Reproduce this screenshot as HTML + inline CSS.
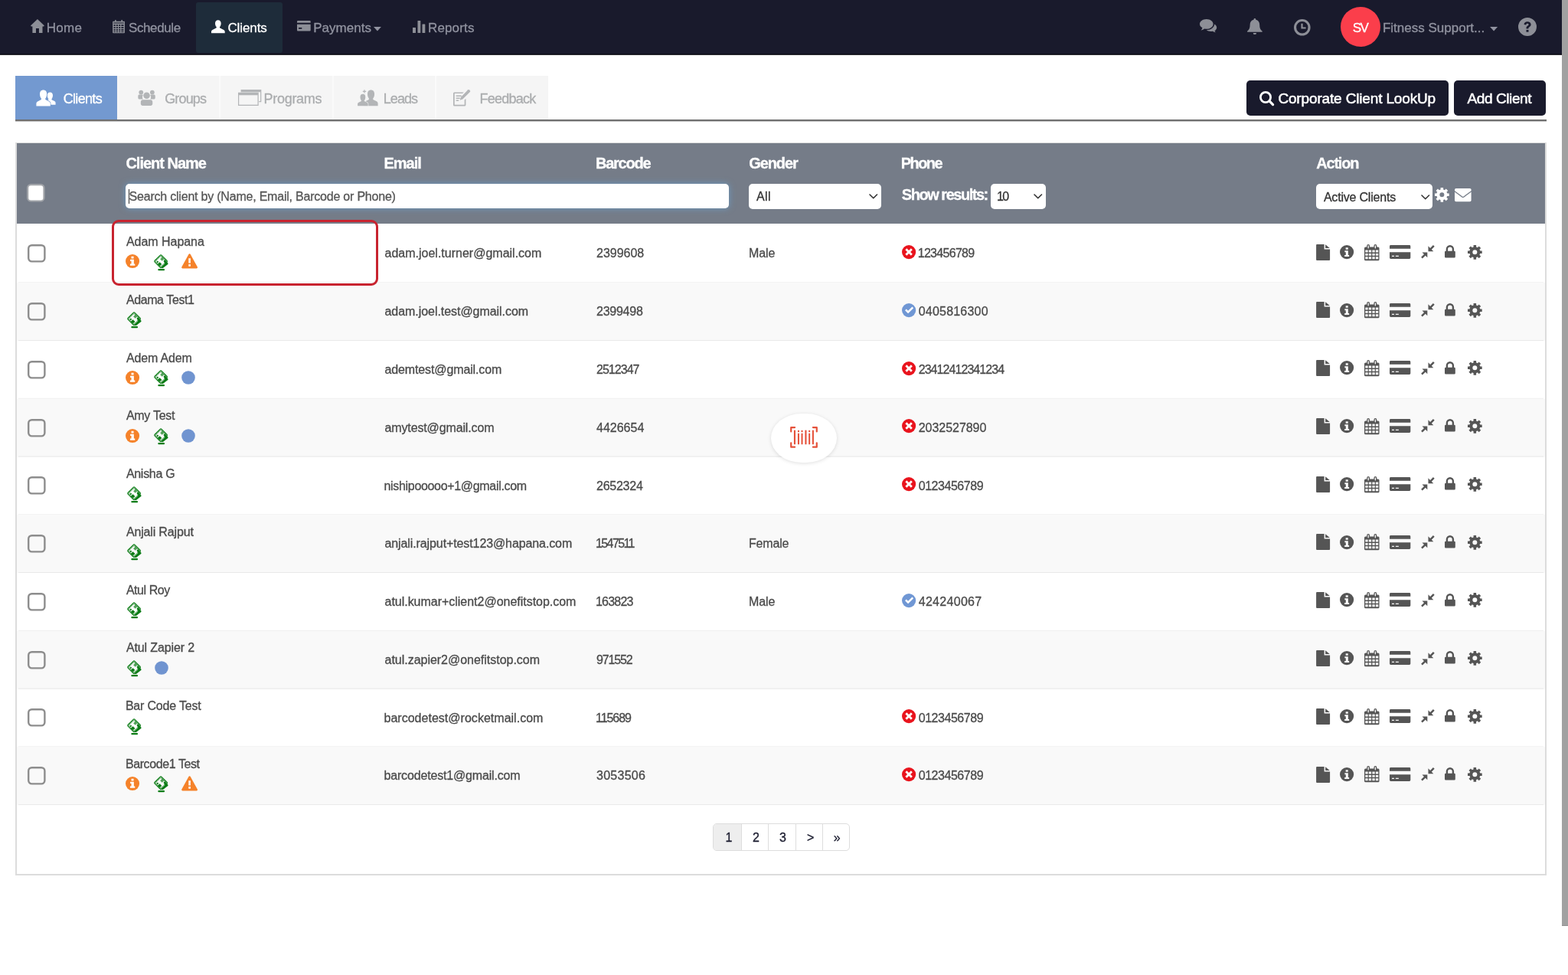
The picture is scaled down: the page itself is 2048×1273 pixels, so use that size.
<!DOCTYPE html>
<html lang="en"><head><meta charset="utf-8"><title>Clients</title>
<style>
*{box-sizing:border-box}
html,body{margin:0;padding:0}
body{width:2048px;height:1273px;overflow:hidden;background:#fff;position:relative;
 font-family:"Liberation Sans",sans-serif;font-size:16px;color:#4a4a4a}
#app{position:absolute;left:0;top:0;width:2048px;height:1273px;will-change:transform}
.t{position:absolute;white-space:pre;display:block;-webkit-text-stroke:.3px}
.ic{position:absolute;display:block;overflow:visible}
.abs{position:absolute}
#nav{position:absolute;left:0;top:0;width:2040px;height:72px;background:linear-gradient(#191a2c,#191a2c 70px,#0d0e19 70px,#0d0e19 71px,#2e2e34 71px)}
#nav .act{position:absolute;left:256px;top:3px;width:113px;height:66px;background:#1e2c3a;border-radius:3px}
#avatar{position:absolute;left:1750.800px;top:8.800px;width:52px;height:52px;border-radius:50%;background:#fb3e4b}
#scroll{position:absolute;left:2040px;top:0;width:8px;height:1209px;background:#a1a1a1;border-bottom:1px solid #8f8f8f}
.tab{position:absolute;top:99px;height:57px;background:#f5f5f5}
.tab.on{background:#7399d0}
#tabline{position:absolute;left:20px;top:156px;width:2000px;height:3px;background:linear-gradient(#6f6f6f,#6f6f6f 2px,#c4c4c4 2px)}
.btn{position:absolute;top:105px;height:46px;background:#191a2c;border-radius:5px}
#tbl{position:absolute;left:20px;top:186px;width:2000px;height:956.500px;border:2px solid #dcdcdc;background:#fff}
#thead{position:absolute;left:22px;top:187px;width:1996px;height:105px;background:#757c88}
.row{position:absolute;left:22px;width:1996px;background:#fff}
.sep{position:absolute;left:24px;width:1992px;height:1px}
.row.alt{background:#f9f9f9}
.cb{position:absolute;width:24px;height:24px;border:2px solid #8c8c8c;border-radius:5.500px;background:#fff}
.row.alt .cb{background:#f9f9f9}
.inp{position:absolute;background:#fff;border-radius:5px}
#search{box-shadow:0 0 8px rgba(102,175,233,.6)}
#hl{position:absolute;left:146px;top:287px;width:348px;height:86px;border:3px solid #c8232f;border-radius:9px}
#pill{position:absolute;left:1007.300px;top:539.500px;width:85.600px;height:64px;border-radius:40px/32px;background:#fff;box-shadow:0 1px 5px rgba(0,0,0,.13)}
#pager{position:absolute;left:931px;top:1075px;width:179px;height:36px;border:1px solid #ddd;border-radius:5px;background:#fff;overflow:hidden}
#pager i{position:absolute;top:0;width:1px;height:100%;background:#ddd}
#pager b{position:absolute;left:0;top:0;width:36px;height:100%;background:#eee}
</style></head>
<body><div id="app">
<div id="nav"><div class="act"></div></div>
<svg class="ic" style="left:40.2px;top:25.2px;width:17.9px;height:17.9px" viewBox="0 0 18 18" fill="#8d8f97" color="#8d8f97" ><path d="M9 0 18 8.600 17.200 9.600H15.600V18H11V12H7V18H2.400V9.600H0.800L0 8.600z"/></svg>
<span class="t" style="left:60.70px;top:26.00px;font-size:17px;line-height:21px;color:#9193a0;letter-spacing:0.302px;">Home</span>
<svg class="ic" style="left:146.6px;top:25.7px;width:16.1px;height:17.2px" viewBox="0 0 16 17.4" fill="#8d8f97" color="#8d8f97" ><path fill-rule="evenodd" d="M3 0h1.600v1.800h6.800V0H13v1.800h2.200a0.800 0.800 0 0 1 0.800 0.800V16.600a0.800 0.800 0 0 1-0.800 0.800H0.800A0.800 0.800 0 0 1 0 16.600V2.600a0.800 0.800 0 0 1 0.800-0.800H3zM1.500 6.300v1.900h2.100V6.300zM4.800 6.300v1.900h2.100V6.300zM8.100 6.300v1.900h2.100V6.300zM11.400 6.300v1.900h3.100V6.300zM1.500 9.300v1.900h2.100V9.300zM4.800 9.300v1.900h2.100V9.300zM8.100 9.300v1.900h2.100V9.300zM11.400 9.300v1.900h3.100V9.300zM1.500 12.300v1.900h2.100v-1.900zM4.800 12.300v1.900h2.100v-1.900zM8.100 12.300v1.900h2.100v-1.900zM11.400 12.300v1.900h3.100v-1.900zM1.500 15.200v1h2.100v-1zM4.800 15.200v1h2.100v-1zM8.100 15.200v1h2.100v-1zM11.400 15.200v1h3.100v-1zM1.200 3.600v0.900h13.600V3.600z"/></svg>
<span class="t" style="left:168.00px;top:26.00px;font-size:17px;line-height:21px;color:#9193a0;letter-spacing:-0.391px;">Schedule</span>
<svg class="ic" style="left:275.9px;top:25.7px;width:17.7px;height:17.4px" viewBox="0 0 18 17.4" fill="#fff" color="#fff" ><path d="M9 0C11.500 0 12.900 1.800 12.900 4.400c0 1.900-0.600 3.600-1.600 4.700-0.300 0.400-0.300 1.100 0.200 1.400l4.900 2.700c1 0.600 1.600 1.400 1.600 2.500v1.700H0v-1.700c0-1.100 0.600-1.900 1.600-2.500l4.900-2.700c0.500-0.300 0.500-1 0.200-1.400C5.700 8 5.100 6.300 5.100 4.400 5.100 1.800 6.500 0 9 0z"/></svg>
<span class="t" style="left:297.40px;top:26.00px;font-size:17px;line-height:21px;color:#fff;letter-spacing:-0.094px;">Clients</span>
<svg class="ic" style="left:388.4px;top:27.1px;width:17.7px;height:13.5px" viewBox="0 0 17.700 13.500" fill="#8d8f97" color="#8d8f97" ><path fill-rule="evenodd" d="M1 0h15.700a1 1 0 0 1 1 1v1.800H0V1a1 1 0 0 1 1-1zM0 4.800h17.700v7.700a1 1 0 0 1-1 1H1a1 1 0 0 1-1-1zM2 9v1.800h4.300V9z"/></svg>
<span class="t" style="left:409.20px;top:26.00px;font-size:17px;line-height:21px;color:#9193a0;letter-spacing:0.045px;">Payments</span>
<svg class="ic" style="left:488.4px;top:34.9px;width:9.9px;height:5.6px" viewBox="0 0 10 5.500" fill="#9193a0" color="#9193a0" ><path d="M0 0h10L5 5.500z"/></svg>
<svg class="ic" style="left:539.4px;top:27.1px;width:16.3px;height:16px" viewBox="0 0 16.300 16" fill="#8d8f97" color="#8d8f97" ><rect x="0" y="9" width="3.300" height="7" rx="0.500"/><rect x="4.400" y="5.500" width="3.300" height="10.500" rx="0.500" opacity="0"/><rect x="6.500" y="0" width="3.800" height="16" rx="0.500"/><rect x="0" y="9" width="4" height="7" rx="0.500"/><rect x="12.500" y="4.500" width="3.800" height="11.500" rx="0.500"/></svg>
<span class="t" style="left:559.00px;top:26.00px;font-size:17px;line-height:21px;color:#9193a0;letter-spacing:0.146px;">Reports</span>
<svg class="ic" style="left:1567px;top:24.9px;width:22.2px;height:17.2px" viewBox="0 0 22.200 17.200" fill="#8d8f97" color="#8d8f97" ><path d="M8.800 0C13.700 0 17.600 2.900 17.600 6.400S13.700 12.800 8.800 12.800c-0.900 0-1.800-0.100-2.600-0.300C5 13.500 3.300 14.200 1.600 14.400c1-1 1.600-2.100 1.800-3.200C1.300 10 0 8.300 0 6.400 0 2.900 3.900 0 8.800 0z"/><path d="M19.300 6.400c1.800 1.100 2.900 2.700 2.900 4.500 0 1.700-1 3.200-2.700 4.300 0.200 0.700 0.700 1.400 1.300 2-1.500-0.100-2.900-0.600-4-1.500-0.700 0.100-1.500 0.200-2.300 0.200-2.200 0-4.200-0.600-5.700-1.700 5.600-0.100 10.200-3.400 10.500-7.800z"/></svg>
<svg class="ic" style="left:1629.3px;top:23.5px;width:19.8px;height:21.5px" viewBox="0 0 19.800 21.500" fill="#8d8f97" color="#8d8f97" ><path d="M9.900 0c0.800 0 1.400 0.600 1.400 1.400v0.400c3.100 0.700 4.900 3.300 4.900 6.600 0 4.800 1.500 6.600 3.300 8 0.500 0.400 0.300 1.300-0.400 1.300H0.700c-0.700 0-0.900-0.900-0.400-1.300 1.800-1.400 3.300-3.200 3.300-8 0-3.300 1.800-5.900 4.900-6.600V1.400C8.500 0.600 9.100 0 9.900 0zM7.700 18.900h4.400a2.200 2.200 0 0 1-4.400 0z"/></svg>
<svg class="ic" style="left:1689.7px;top:24.9px;width:21.6px;height:21.6px" viewBox="0 0 21.6 21.6" fill="#8d8f97" color="#8d8f97" ><path fill-rule="evenodd" d="M10.800 0a10.800 10.800 0 1 1 0 21.600A10.800 10.800 0 0 1 10.800 0zM10.800 3.100a7.700 7.700 0 1 0 0 15.400 7.700 7.700 0 0 0 0-15.400zM9.400 5.800h2.200v4.600h4v2.200H9.400z"/></svg>
<div id="avatar"></div>
<span class="t" style="left:1766.80px;top:26.00px;font-size:17px;line-height:21px;color:#fff;letter-spacing:-1.600px;">SV</span>
<span class="t" style="left:1805.90px;top:26.00px;font-size:17px;line-height:21px;color:#9193a0;letter-spacing:0.006px;">Fitness Support...</span>
<svg class="ic" style="left:1946px;top:34.9px;width:10.2px;height:5.5px" viewBox="0 0 10 5.500" fill="#9193a0" color="#9193a0" ><path d="M0 0h10L5 5.500z"/></svg>
<svg class="ic" style="left:1982.9px;top:23.3px;width:24px;height:24px" viewBox="0 0 24 24" fill="#8d8f97" color="#8d8f97" ><path fill-rule="evenodd" d="M12 0a12 12 0 1 1 0 24A12 12 0 0 1 12 0zM12 5.200c-2.500 0-4.300 1.500-4.500 3.800l2.700 0.400c0.100-1 0.800-1.700 1.800-1.700 0.900 0 1.600 0.600 1.600 1.400 0 0.700-0.400 1.100-1.300 1.700-1.200 0.800-1.800 1.500-1.800 3v0.600h2.900v-0.400c0-0.700 0.300-1.100 1.200-1.700 1.300-0.900 2-1.800 2-3.300 0-2.300-1.900-3.800-4.600-3.800zM10.500 15.900v2.900h3v-2.900z"/></svg>
<div id="scroll"></div>
<div class="tab on" style="left:20px;width:133.0px"></div>
<div class="tab " style="left:153px;width:563.0px"></div>
<div class="abs" style="left:286px;top:99px;width:1.500px;height:57px;background:#fafafa"></div>
<div class="abs" style="left:434px;top:99px;width:1.500px;height:57px;background:#fafafa"></div>
<div class="abs" style="left:568px;top:99px;width:1.500px;height:57px;background:#fafafa"></div>
<div id="tabline"></div>
<svg class="ic" style="left:47.9px;top:116.7px;width:24.6px;height:21.4px" viewBox="0 0 24.600 21.400" fill="#fff" color="#fff" ><path d="M17.40 3.40C19.90 3.40 20.99 5.12 20.99 7.61C20.99 9.48 20.44 11.04 19.58 12.14C19.27 12.60 19.43 13.23 19.90 13.46L23.17 15.10C24.11 15.57 24.58 16.35 24.58 17.28V19.78H10.22V17.28C10.22 16.35 10.69 15.57 11.63 15.10L14.90 13.46C15.37 13.23 15.53 12.60 15.22 12.14C14.36 11.04 13.81 9.48 13.81 7.61C13.81 5.12 14.90 3.40 17.40 3.40z"/><path stroke="#7399d0" stroke-width="1.300" paint-order="stroke" d="M8.60 0.40C11.80 0.40 13.20 2.60 13.20 5.80C13.20 8.20 12.50 10.20 11.40 11.60C11.00 12.20 11.20 13.00 11.80 13.30L16.00 15.40C17.20 16.00 17.80 17.00 17.80 18.20V21.40H-0.60V18.20C-0.60 17.00 0.00 16.00 1.20 15.40L5.40 13.30C6.00 13.00 6.20 12.20 5.80 11.60C4.70 10.20 4.00 8.20 4.00 5.80C4.00 2.60 5.40 0.40 8.60 0.40z" class="u2"/></svg>
<span class="t" style="left:82.70px;top:118.00px;font-size:18px;line-height:22px;color:#fff;letter-spacing:-0.670px;">Clients</span>
<svg class="ic" style="left:179.8px;top:116.7px;width:23.1px;height:21px" viewBox="0 0 23 21" fill="#b3b5b7" color="#b3b5b7" ><circle cx="4.200" cy="3.600" r="2.900"/><circle cx="18.800" cy="3.600" r="2.900"/><path d="M0.300 8.200c0-1 0.800-1.700 1.800-1.700h3.600c0.500 0 0.900 0.200 1.200 0.500-0.800 1-1.200 2.300-0.900 3.700 0.100 0.700 0.400 1.300 0.800 1.800H2.100c-1 0-1.800-0.800-1.800-1.800zM22.700 8.200c0-1-0.800-1.700-1.800-1.700h-3.600c-0.500 0-0.900 0.200-1.200 0.500 0.800 1 1.200 2.300 0.900 3.700-0.100 0.700-0.400 1.300-0.800 1.800h4.700c1 0 1.800-0.800 1.800-1.800z"/><circle cx="11.500" cy="7.800" r="4.300"/><path d="M3.800 16c0-1.500 1.200-2.700 2.700-2.700h10c1.500 0 2.700 1.200 2.700 2.700v2.500c0 1.400-1.100 2.500-2.500 2.500H6.300c-1.400 0-2.500-1.100-2.500-2.500z"/></svg>
<span class="t" style="left:215.20px;top:118.00px;font-size:18px;line-height:22px;color:#aaacae;letter-spacing:-0.845px;">Groups</span>
<svg class="ic" style="left:311px;top:116.7px;width:30.3px;height:21px" viewBox="0 0 30.300 21" fill="#b3b5b7" color="#b3b5b7" ><path fill-rule="evenodd" d="M3.600 0h26.700v16.200h-3V15h1.800V3.200H3.600zM0 3.700h26.700V21H0zM1.200 7.200v12.600h24.300V7.200z"/></svg>
<span class="t" style="left:344.60px;top:118.00px;font-size:18px;line-height:22px;color:#aaacae;letter-spacing:-0.303px;">Programs</span>
<svg class="ic" style="left:467.2px;top:116.7px;width:27px;height:21.4px" viewBox="0 0 27.400 21.400" fill="#b3b5b7" color="#b3b5b7" ><path d="M17.80 0.40C21.00 0.40 22.40 2.60 22.40 5.80C22.40 8.20 21.70 10.20 20.60 11.60C20.20 12.20 20.40 13.00 21.00 13.30L25.20 15.40C26.40 16.00 27.00 17.00 27.00 18.20V21.40H8.60V18.20C8.60 17.00 9.20 16.00 10.40 15.40L14.60 13.30C15.20 13.00 15.40 12.20 15.00 11.60C13.90 10.20 13.20 8.20 13.20 5.80C13.20 2.60 14.60 0.40 17.80 0.40z"/><path stroke="#f5f5f5" stroke-width="1.200" paint-order="stroke" d="M7.00 5.60C9.40 5.60 10.45 7.25 10.45 9.65C10.45 11.45 9.93 12.95 9.10 14.00C8.80 14.45 8.95 15.05 9.40 15.28L12.55 16.85C13.45 17.30 13.90 18.05 13.90 18.95V21.35H0.10V18.95C0.10 18.05 0.55 17.30 1.45 16.85L4.60 15.28C5.05 15.05 5.20 14.45 4.90 14.00C4.08 12.95 3.55 11.45 3.55 9.65C3.55 7.25 4.60 5.60 7.00 5.60z"/><path d="M8.500 0h1.200v1.600h1.600v1.200H9.700v1.600H8.500V2.800H6.900V1.600h1.600z"/></svg>
<span class="t" style="left:500.70px;top:118.00px;font-size:18px;line-height:22px;color:#aaacae;letter-spacing:-0.911px;">Leads</span>
<svg class="ic" style="left:591.9px;top:116.7px;width:22.2px;height:21.4px" viewBox="0 0 22.200 21.400" fill="#b3b5b7" color="#b3b5b7" ><path fill-rule="evenodd" d="M1.500 3.400h12.300l-1.700 1.700H1.700v14.600h13V13.400l1.700-1.700v8.200a1.500 1.500 0 0 1-1.500 1.500H1.500A1.500 1.500 0 0 1 0 19.900V4.900a1.500 1.500 0 0 1 1.500-1.500z"/><path d="M3.700 7.600h7v1.500h-7zM3.700 10.600h5v1.500h-5zM3.700 13.600h3.400v1.500H3.700z"/><path d="M19.300 0.300a1 1 0 0 1 1.400 0l1.200 1.200a1 1 0 0 1 0 1.400L12.300 12.500 8.600 13.700 9.800 10z"/></svg>
<span class="t" style="left:626.50px;top:118.00px;font-size:18px;line-height:22px;color:#aaacae;letter-spacing:-0.750px;">Feedback</span>
<div class="btn" style="left:1628px;width:264px"></div>
<div class="btn" style="left:1898.700px;width:120px"></div>
<svg class="ic" style="left:1645.3px;top:118.6px;width:19.4px;height:19.4px" viewBox="0 0 19.4 19.4" fill="#fff" color="#fff" ><g fill="none" stroke="currentColor"><circle cx="8" cy="8" r="6.600" stroke-width="2.800"/><path stroke-width="3.200" stroke-linecap="round" d="M13 13 17.600 17.600"/></g></svg>
<span class="t" style="left:1669.40px;top:117.00px;font-size:19px;line-height:23px;color:#fff;letter-spacing:-0.152px;-webkit-text-stroke:.5px #fff;">Corporate Client LookUp</span>
<span class="t" style="left:1916.60px;top:117.00px;font-size:19px;line-height:23px;color:#fff;letter-spacing:-0.420px;-webkit-text-stroke:.5px #fff;">Add Client</span>
<div id="tbl"></div><div id="thead"></div>
<span class="t" style="left:164.40px;top:201.00px;font-size:20px;line-height:24px;font-weight:700;color:#fff;letter-spacing:-1.006px;">Client Name</span>
<span class="t" style="left:501.50px;top:201.00px;font-size:20px;line-height:24px;font-weight:700;color:#fff;letter-spacing:-1.001px;">Email</span>
<span class="t" style="left:778.00px;top:201.00px;font-size:20px;line-height:24px;font-weight:700;color:#fff;letter-spacing:-1.251px;">Barcode</span>
<span class="t" style="left:978.30px;top:201.00px;font-size:20px;line-height:24px;font-weight:700;color:#fff;letter-spacing:-1.107px;">Gender</span>
<span class="t" style="left:1176.80px;top:201.00px;font-size:20px;line-height:24px;font-weight:700;color:#fff;letter-spacing:-1.600px;">Phone</span>
<span class="t" style="left:1719.20px;top:201.00px;font-size:20px;line-height:24px;font-weight:700;color:#fff;letter-spacing:-1.180px;">Action</span>
<svg class="ic" style="left:35.2px;top:239.8px;width:23.6px;height:23.6px" viewBox="0 0 23.6 23.6" ><rect x="1.100" y="1.100" width="21.400" height="21.400" rx="4.300" fill="#fff" stroke="#a0a3a8" stroke-width="2.200"/></svg>
<div class="inp" id="search" style="left:164px;top:240px;width:788px;height:32px"></div>
<div class="abs" style="left:168px;top:246.500px;width:1.200px;height:19px;background:#333"></div>
<span class="t" style="left:168.60px;top:247.00px;font-size:16px;line-height:20px;color:#555;letter-spacing:-0.214px;">Search client by (Name, Email, Barcode or Phone)</span>
<div class="inp" style="left:977.800px;top:240px;width:173px;height:32.500px"></div>
<span class="t" style="left:988.00px;top:247.00px;font-size:16px;line-height:20px;color:#333;letter-spacing:0.387px;">All</span>
<svg class="ic" style="left:1135.3px;top:252.8px;width:11.5px;height:6.7px" viewBox="0 0 12 7" ><path fill="none" stroke="#333" stroke-width="1.600" stroke-linecap="round" stroke-linejoin="round" d="M1 1 6 6 11 1"/></svg>
<span class="t" style="left:1177.80px;top:242.00px;font-size:20px;line-height:24px;font-weight:700;color:#fff;letter-spacing:-1.473px;">Show results:</span>
<div class="inp" style="left:1293.700px;top:240px;width:72px;height:32.500px"></div>
<span class="t" style="left:1302.00px;top:247.00px;font-size:16px;line-height:20px;color:#333;letter-spacing:-1.600px;">10</span>
<svg class="ic" style="left:1349.9px;top:252.8px;width:11.5px;height:6.7px" viewBox="0 0 12 7" ><path fill="none" stroke="#333" stroke-width="1.600" stroke-linecap="round" stroke-linejoin="round" d="M1 1 6 6 11 1"/></svg>
<div class="inp" style="left:1718.800px;top:240.200px;width:152.400px;height:32.700px"></div>
<span class="t" style="left:1728.90px;top:248.00px;font-size:16px;line-height:20px;color:#333;letter-spacing:-0.202px;">Active Clients</span>
<svg class="ic" style="left:1855.7px;top:253.8px;width:11.5px;height:6.7px" viewBox="0 0 12 7" ><path fill="none" stroke="#333" stroke-width="1.600" stroke-linecap="round" stroke-linejoin="round" d="M1 1 6 6 11 1"/></svg>
<svg class="ic" style="left:1874.4px;top:244.9px;width:18.7px;height:18.7px" viewBox="0 0 18.6 18.6" fill="#fff" color="#fff" ><g fill="none" stroke="currentColor"><circle cx="9.3" cy="9.3" r="5.00" stroke-width="4.00"/><path stroke-width="3.5" d="M15.30 9.30L18.60 9.30M13.54 13.54L15.88 15.88M9.30 15.30L9.30 18.60M5.06 13.54L2.72 15.88M3.30 9.30L0.00 9.30M5.06 5.06L2.72 2.72M9.30 3.30L9.30 0.00M13.54 5.06L15.88 2.72"/></g></svg>
<svg class="ic" style="left:1900.2px;top:246px;width:21.6px;height:17.3px" viewBox="0 0 21.6 17.3" fill="#fff" color="#fff" ><rect x="0" y="0" width="21.6" height="17.3" rx="1.700"/><path fill="none" stroke="#757c88" stroke-width="1.300" stroke-linejoin="round" d="M-0.500 3.400 9.600 10.900a2 2 0 0 0 2.400 0L22.100 3.400"/></svg>
<div class="row" style="top:292px;height:77px"></div>
<div class="sep" style="top:368px;background:rgba(0,0,0,0.049)"></div><div class="sep" style="top:369px;background:rgba(0,0,0,0.016)"></div>
<svg class="ic" style="left:35.9px;top:319.4px;width:23.6px;height:23.6px" viewBox="0 0 23.6 23.6" ><rect x="1.200" y="1.200" width="21.200" height="21.200" rx="4.300" fill="none" stroke="#8d8d8d" stroke-width="2.400"/></svg>
<span class="t" style="left:164.90px;top:306.00px;font-size:16px;line-height:20px;color:#4a4a4a;letter-spacing:-0.029px;">Adam Hapana</span>
<svg class="ic" style="left:164.4px;top:332.4px;width:18.1px;height:18.1px" viewBox="0 0 18 18" ><circle cx="9" cy="9" r="9" fill="#f5822a"/><path fill="#fff" d="M7.500 2.700h3v2.800H7.500zM6.100 6.800h4.700v5.700h1.400v2.200H5.900v-2.200h1.600V9H6.100z"/></svg>
<svg class="ic" style="left:200.9px;top:331.6px;width:18.2px;height:21.4px" viewBox="0 0 18.2 21.4" ><g fill="none" stroke="#0c7c16"><rect x="-6.200" y="-6.200" width="12.400" height="12.400" rx="1.300" stroke-width="1.300" transform="translate(9.100 9.200) rotate(45)"/><rect x="-4.900" y="-4.900" width="9.800" height="9.800" rx="0.800" stroke-width="0.900" stroke-dasharray="1.400 0.500" transform="translate(9.100 9.200) rotate(45)"/></g><g fill="#0c7c16"><path d="M14.300 6.900 18.300 11.500a1.200 1.200 0 0 1 0 1.500L11.600 18.300 9.300 17.600 14.600 12.300 12.500 8.700z"/><rect x="-1.900" y="-1.900" width="3.800" height="3.800" rx="0.400" transform="translate(7.600 12.900) rotate(45)"/><circle cx="4.900" cy="9.900" r="1.050"/><rect x="-1.800" y="-1.800" width="3.600" height="3.600" opacity="0.700" transform="translate(10.700 6.200) rotate(45)"/><rect x="5.300" y="18.900" width="8.800" height="2.400" rx="1.100"/></g></svg>
<svg class="ic" style="left:237.1px;top:331.1px;width:21.2px;height:19.6px" viewBox="0 0 21 19.6" ><path fill="#f5822a" d="M10.500 0.300a1.300 1.300 0 0 1 1.150 0.700l9.100 16.500a1.300 1.300 0 0 1-1.150 1.950H1.400a1.300 1.300 0 0 1-1.150-1.950L9.350 1a1.300 1.300 0 0 1 1.150-0.700z"/><path fill="#fff" d="M9.200 6.200h2.600v6.300H9.200zM9.200 14.100h2.600v2.600H9.200z"/><path fill="#f5822a" opacity=".35" d="M9.200 9.300h2.600v0.500H9.200z"/></svg>
<span class="t" style="left:502.50px;top:321.00px;font-size:16px;line-height:20px;color:#4a4a4a;letter-spacing:0.003px;">adam.joel.turner@gmail.com</span>
<span class="t" style="left:779.00px;top:321.00px;font-size:16px;line-height:20px;color:#4a4a4a;letter-spacing:-0.015px;">2399608</span>
<span class="t" style="left:978.00px;top:321.00px;font-size:16px;line-height:20px;color:#4a4a4a;letter-spacing:-0.094px;">Male</span>
<svg class="ic" style="left:1177.6px;top:320.1px;width:18.2px;height:18.2px" viewBox="0 0 18 18" ><circle cx="9" cy="9" r="9" fill="#e9141d"/><path fill="#fff" d="M4.300 6.300 6.300 4.300 9 7 11.700 4.300 13.700 6.300 11 9 13.700 11.700 11.700 13.700 9 11 6.300 13.700 4.300 11.700 7 9z"/></svg>
<span class="t" style="left:1198.70px;top:321.00px;font-size:16px;line-height:20px;color:#4a4a4a;letter-spacing:-0.698px;">123456789</span>
<svg class="ic" style="left:1719px;top:318.7px;width:18.2px;height:21px" viewBox="0 0 18 21" fill="#555" color="#555" ><path d="M1 0h9.5v6.5H18V20a1 1 0 0 1-1 1H1a1 1 0 0 1-1-1V1a1 1 0 0 1 1-1z"/><path d="M12 0.3 17.7 5H12z"/></svg>
<svg class="ic" style="left:1750.3px;top:319.9px;width:18.2px;height:18.2px" viewBox="0 0 18 18" fill="#555" color="#555" ><path fill-rule="evenodd" d="M9 0a9 9 0 1 0 0 18A9 9 0 0 0 9 0zM7.6 3.2h3v2.6h-3zM6.3 7.2h4.4v5.6h1.3v2H6.1v-2h1.6V9.2H6.3z"/></svg>
<svg class="ic" style="left:1782px;top:318.6px;width:19.5px;height:21.2px" viewBox="0 0 19.5 21.2" fill="#555" color="#555" ><path fill-rule="evenodd" d="M3.200 1.950a1.950 1.950 0 0 1 3.900 0V3.400h5.300V1.950a1.950 1.950 0 0 1 3.900 0V3.400H18a1.500 1.500 0 0 1 1.500 1.500V19.700a1.500 1.500 0 0 1-1.500 1.500H1.500A1.500 1.500 0 0 1 0 19.700V4.900a1.500 1.500 0 0 1 1.500-1.500h1.700zM4.500 1.950v2.800a0.650 0.650 0 0 0 1.300 0V1.950a0.650 0.650 0 0 0-1.300 0zM13.700 1.950v2.800a0.650 0.650 0 0 0 1.300 0V1.950a0.650 0.650 0 0 0-1.300 0zM1.300 7.500v2.900h3.300V7.500zM5.800 7.500v2.900h3.300V7.500zM10.400 7.500v2.900h3.300V7.500zM14.900 7.500v2.900h3.300V7.500zM1.300 11.900v2.900h3.300v-2.900zM5.800 11.900v2.900h3.300v-2.900zM10.400 11.900v2.900h3.300v-2.900zM14.900 11.900v2.900h3.300v-2.900zM1.300 16.300v2.900h3.300v-2.900zM5.800 16.300v2.900h3.300v-2.900zM10.400 16.300v2.900h3.300v-2.900zM14.900 16.300v2.900h3.300v-2.900z"/></svg>
<svg class="ic" style="left:1814.9px;top:319.9px;width:27.3px;height:18.1px" viewBox="0 0 27.5 18" fill="#555" color="#555" ><path fill-rule="evenodd" d="M1.5 0h24.5a1.5 1.5 0 0 1 1.5 1.5V4.6H0V1.5A1.5 1.5 0 0 1 1.5 0zM0 9.2h27.5v7.3a1.5 1.5 0 0 1-1.5 1.5H1.5A1.5 1.5 0 0 1 0 16.500zM3 13.700v1.400h3v-1.400zM7.900 13.700v1.400h4v-1.400z"/></svg>
<svg class="ic" style="left:1855.9px;top:320.2px;width:17.8px;height:17.6px" viewBox="0 0 18 18" fill="#555" color="#555" ><path d="M16.200 0 18 1.800 14 5.800 16.600 8.400H9.600V1.400L12.200 4zM1.800 18 0 16.200 4 12.200 1.400 9.600H8.400V16.600L5.800 14z"/></svg>
<svg class="ic" style="left:1887.2px;top:320.1px;width:13.8px;height:16.5px" viewBox="0 0 13.8 16.5" fill="#555" color="#555" ><path fill-rule="evenodd" d="M6.900 0a5.200 5.200 0 0 1 5.200 5.200V7.800h0.500a1.200 1.200 0 0 1 1.200 1.200V15.300a1.200 1.200 0 0 1-1.200 1.200H1.200A1.200 1.200 0 0 1 0 15.300V9a1.200 1.200 0 0 1 1.200-1.200h0.500V5.200A5.200 5.200 0 0 1 6.900 0zM6.900 2.400a2.800 2.800 0 0 0-2.800 2.800V7.800h5.600V5.200A2.800 2.800 0 0 0 6.900 2.400z"/></svg>
<svg class="ic" style="left:1917.2px;top:319.8px;width:18.7px;height:18.7px" viewBox="0 0 18.6 18.6" fill="#555" color="#555" ><g fill="none" stroke="currentColor"><circle cx="9.3" cy="9.3" r="5.00" stroke-width="4.00"/><path stroke-width="3.5" d="M15.30 9.30L18.60 9.30M13.54 13.54L15.88 15.88M9.30 15.30L9.30 18.60M5.06 13.54L2.72 15.88M3.30 9.30L0.00 9.30M5.06 5.06L2.72 2.72M9.30 3.30L9.30 0.00M13.54 5.06L15.88 2.72"/></g></svg>
<div class="row alt" style="top:369px;height:76px"></div>
<div class="sep" style="top:444px;background:rgba(0,0,0,0.064)"></div>
<svg class="ic" style="left:35.9px;top:395.15px;width:23.6px;height:23.6px" viewBox="0 0 23.6 23.6" ><rect x="1.200" y="1.200" width="21.200" height="21.200" rx="4.300" fill="none" stroke="#8d8d8d" stroke-width="2.400"/></svg>
<span class="t" style="left:164.90px;top:382.00px;font-size:16px;line-height:20px;color:#4a4a4a;letter-spacing:-0.398px;">Adama Test1</span>
<svg class="ic" style="left:166.2px;top:407.35px;width:18.2px;height:21.4px" viewBox="0 0 18.2 21.4" ><g fill="none" stroke="#0c7c16"><rect x="-6.200" y="-6.200" width="12.400" height="12.400" rx="1.300" stroke-width="1.300" transform="translate(9.100 9.200) rotate(45)"/><rect x="-4.900" y="-4.900" width="9.800" height="9.800" rx="0.800" stroke-width="0.900" stroke-dasharray="1.400 0.500" transform="translate(9.100 9.200) rotate(45)"/></g><g fill="#0c7c16"><path d="M14.300 6.900 18.300 11.500a1.200 1.200 0 0 1 0 1.500L11.600 18.300 9.300 17.600 14.600 12.300 12.500 8.700z"/><rect x="-1.900" y="-1.900" width="3.800" height="3.800" rx="0.400" transform="translate(7.600 12.900) rotate(45)"/><circle cx="4.900" cy="9.900" r="1.050"/><rect x="-1.800" y="-1.800" width="3.600" height="3.600" opacity="0.700" transform="translate(10.700 6.200) rotate(45)"/><rect x="5.300" y="18.900" width="8.800" height="2.400" rx="1.100"/></g></svg>
<span class="t" style="left:502.50px;top:397.00px;font-size:16px;line-height:20px;color:#4a4a4a;letter-spacing:-0.049px;">adam.joel.test@gmail.com</span>
<span class="t" style="left:779.00px;top:397.00px;font-size:16px;line-height:20px;color:#4a4a4a;letter-spacing:-0.248px;">2399498</span>
<svg class="ic" style="left:1177.6px;top:395.85px;width:18.2px;height:18.2px" viewBox="0 0 18 18" ><circle cx="9" cy="9" r="9" fill="#7097d4"/><path fill="#fff" d="M4 9.200 5.800 7.400 8 9.700 13.300 4.400 15 6.200 8 13.200z"/></svg>
<span class="t" style="left:1199.70px;top:397.00px;font-size:16px;line-height:20px;color:#4a4a4a;letter-spacing:0.213px;">0405816300</span>
<svg class="ic" style="left:1719px;top:394.45px;width:18.2px;height:21px" viewBox="0 0 18 21" fill="#555" color="#555" ><path d="M1 0h9.5v6.5H18V20a1 1 0 0 1-1 1H1a1 1 0 0 1-1-1V1a1 1 0 0 1 1-1z"/><path d="M12 0.3 17.7 5H12z"/></svg>
<svg class="ic" style="left:1750.3px;top:395.65px;width:18.2px;height:18.2px" viewBox="0 0 18 18" fill="#555" color="#555" ><path fill-rule="evenodd" d="M9 0a9 9 0 1 0 0 18A9 9 0 0 0 9 0zM7.6 3.2h3v2.6h-3zM6.3 7.2h4.4v5.6h1.3v2H6.1v-2h1.6V9.2H6.3z"/></svg>
<svg class="ic" style="left:1782px;top:394.35px;width:19.5px;height:21.2px" viewBox="0 0 19.5 21.2" fill="#555" color="#555" ><path fill-rule="evenodd" d="M3.200 1.950a1.950 1.950 0 0 1 3.900 0V3.400h5.300V1.950a1.950 1.950 0 0 1 3.900 0V3.400H18a1.500 1.500 0 0 1 1.500 1.500V19.700a1.500 1.500 0 0 1-1.500 1.500H1.500A1.500 1.500 0 0 1 0 19.700V4.900a1.500 1.500 0 0 1 1.500-1.500h1.700zM4.500 1.950v2.800a0.650 0.650 0 0 0 1.300 0V1.950a0.650 0.650 0 0 0-1.300 0zM13.700 1.950v2.800a0.650 0.650 0 0 0 1.300 0V1.950a0.650 0.650 0 0 0-1.300 0zM1.300 7.500v2.900h3.300V7.500zM5.800 7.500v2.900h3.300V7.500zM10.400 7.500v2.900h3.300V7.500zM14.900 7.500v2.900h3.300V7.500zM1.300 11.900v2.900h3.300v-2.900zM5.800 11.900v2.900h3.300v-2.900zM10.400 11.900v2.900h3.300v-2.900zM14.900 11.900v2.900h3.300v-2.900zM1.300 16.300v2.900h3.300v-2.900zM5.800 16.300v2.900h3.300v-2.900zM10.400 16.300v2.900h3.300v-2.900zM14.900 16.300v2.900h3.300v-2.900z"/></svg>
<svg class="ic" style="left:1814.9px;top:395.65px;width:27.3px;height:18.1px" viewBox="0 0 27.5 18" fill="#555" color="#555" ><path fill-rule="evenodd" d="M1.5 0h24.5a1.5 1.5 0 0 1 1.5 1.5V4.6H0V1.5A1.5 1.5 0 0 1 1.5 0zM0 9.2h27.5v7.3a1.5 1.5 0 0 1-1.5 1.5H1.5A1.5 1.5 0 0 1 0 16.500zM3 13.700v1.400h3v-1.400zM7.900 13.700v1.400h4v-1.400z"/></svg>
<svg class="ic" style="left:1855.9px;top:395.95px;width:17.8px;height:17.6px" viewBox="0 0 18 18" fill="#555" color="#555" ><path d="M16.200 0 18 1.800 14 5.800 16.600 8.400H9.600V1.400L12.200 4zM1.800 18 0 16.200 4 12.200 1.400 9.600H8.400V16.600L5.800 14z"/></svg>
<svg class="ic" style="left:1887.2px;top:395.85px;width:13.8px;height:16.5px" viewBox="0 0 13.8 16.5" fill="#555" color="#555" ><path fill-rule="evenodd" d="M6.900 0a5.200 5.200 0 0 1 5.200 5.200V7.800h0.500a1.200 1.200 0 0 1 1.200 1.200V15.300a1.200 1.200 0 0 1-1.200 1.200H1.200A1.200 1.200 0 0 1 0 15.300V9a1.200 1.200 0 0 1 1.200-1.200h0.500V5.200A5.200 5.200 0 0 1 6.900 0zM6.900 2.400a2.800 2.800 0 0 0-2.800 2.800V7.800h5.600V5.200A2.800 2.800 0 0 0 6.900 2.400z"/></svg>
<svg class="ic" style="left:1917.2px;top:395.55px;width:18.7px;height:18.7px" viewBox="0 0 18.6 18.6" fill="#555" color="#555" ><g fill="none" stroke="currentColor"><circle cx="9.3" cy="9.3" r="5.00" stroke-width="4.00"/><path stroke-width="3.5" d="M15.30 9.30L18.60 9.30M13.54 13.54L15.88 15.88M9.30 15.30L9.30 18.60M5.06 13.54L2.72 15.88M3.30 9.30L0.00 9.30M5.06 5.06L2.72 2.72M9.30 3.30L9.30 0.00M13.54 5.06L15.88 2.72"/></g></svg>
<div class="row" style="top:445px;height:76px"></div>
<div class="sep" style="top:519px;background:rgba(0,0,0,0.015)"></div><div class="sep" style="top:520px;background:rgba(0,0,0,0.050)"></div>
<svg class="ic" style="left:35.9px;top:470.91px;width:23.6px;height:23.6px" viewBox="0 0 23.6 23.6" ><rect x="1.200" y="1.200" width="21.200" height="21.200" rx="4.300" fill="none" stroke="#8d8d8d" stroke-width="2.400"/></svg>
<span class="t" style="left:164.90px;top:458.00px;font-size:16px;line-height:20px;color:#4a4a4a;letter-spacing:-0.151px;">Adem Adem</span>
<svg class="ic" style="left:164.4px;top:483.91px;width:18.1px;height:18.1px" viewBox="0 0 18 18" ><circle cx="9" cy="9" r="9" fill="#f5822a"/><path fill="#fff" d="M7.500 2.700h3v2.800H7.500zM6.100 6.800h4.700v5.700h1.400v2.200H5.900v-2.200h1.600V9H6.100z"/></svg>
<svg class="ic" style="left:200.9px;top:483.11px;width:18.2px;height:21.4px" viewBox="0 0 18.2 21.4" ><g fill="none" stroke="#0c7c16"><rect x="-6.200" y="-6.200" width="12.400" height="12.400" rx="1.300" stroke-width="1.300" transform="translate(9.100 9.200) rotate(45)"/><rect x="-4.900" y="-4.900" width="9.800" height="9.800" rx="0.800" stroke-width="0.900" stroke-dasharray="1.400 0.500" transform="translate(9.100 9.200) rotate(45)"/></g><g fill="#0c7c16"><path d="M14.300 6.900 18.300 11.500a1.200 1.200 0 0 1 0 1.500L11.600 18.300 9.300 17.600 14.600 12.300 12.500 8.700z"/><rect x="-1.900" y="-1.900" width="3.800" height="3.800" rx="0.400" transform="translate(7.600 12.900) rotate(45)"/><circle cx="4.900" cy="9.900" r="1.050"/><rect x="-1.800" y="-1.800" width="3.600" height="3.600" opacity="0.700" transform="translate(10.700 6.200) rotate(45)"/><rect x="5.300" y="18.900" width="8.800" height="2.400" rx="1.100"/></g></svg>
<svg class="ic" style="left:237.2px;top:483.91px;width:18px;height:18px" viewBox="0 0 18 18" ><circle cx="9" cy="9" r="8.800" fill="#7094d0"/></svg>
<span class="t" style="left:502.50px;top:473.00px;font-size:16px;line-height:20px;color:#4a4a4a;letter-spacing:-0.125px;">ademtest@gmail.com</span>
<span class="t" style="left:779.00px;top:473.00px;font-size:16px;line-height:20px;color:#4a4a4a;letter-spacing:-0.965px;">2512347</span>
<svg class="ic" style="left:1177.6px;top:471.61px;width:18.2px;height:18.2px" viewBox="0 0 18 18" ><circle cx="9" cy="9" r="9" fill="#e9141d"/><path fill="#fff" d="M4.300 6.300 6.300 4.300 9 7 11.700 4.300 13.700 6.300 11 9 13.700 11.700 11.700 13.700 9 11 6.300 13.700 4.300 11.700 7 9z"/></svg>
<span class="t" style="left:1199.70px;top:473.00px;font-size:16px;line-height:20px;color:#4a4a4a;letter-spacing:-0.937px;">23412412341234</span>
<svg class="ic" style="left:1719px;top:470.21px;width:18.2px;height:21px" viewBox="0 0 18 21" fill="#555" color="#555" ><path d="M1 0h9.5v6.5H18V20a1 1 0 0 1-1 1H1a1 1 0 0 1-1-1V1a1 1 0 0 1 1-1z"/><path d="M12 0.3 17.7 5H12z"/></svg>
<svg class="ic" style="left:1750.3px;top:471.41px;width:18.2px;height:18.2px" viewBox="0 0 18 18" fill="#555" color="#555" ><path fill-rule="evenodd" d="M9 0a9 9 0 1 0 0 18A9 9 0 0 0 9 0zM7.6 3.2h3v2.6h-3zM6.3 7.2h4.4v5.6h1.3v2H6.1v-2h1.6V9.2H6.3z"/></svg>
<svg class="ic" style="left:1782px;top:470.11px;width:19.5px;height:21.2px" viewBox="0 0 19.5 21.2" fill="#555" color="#555" ><path fill-rule="evenodd" d="M3.200 1.950a1.950 1.950 0 0 1 3.900 0V3.400h5.300V1.950a1.950 1.950 0 0 1 3.900 0V3.400H18a1.500 1.500 0 0 1 1.500 1.500V19.700a1.500 1.500 0 0 1-1.500 1.500H1.500A1.500 1.500 0 0 1 0 19.700V4.900a1.500 1.500 0 0 1 1.500-1.500h1.700zM4.500 1.950v2.800a0.650 0.650 0 0 0 1.300 0V1.950a0.650 0.650 0 0 0-1.300 0zM13.700 1.950v2.800a0.650 0.650 0 0 0 1.300 0V1.950a0.650 0.650 0 0 0-1.300 0zM1.300 7.500v2.900h3.300V7.500zM5.800 7.500v2.900h3.300V7.500zM10.400 7.500v2.900h3.300V7.500zM14.900 7.500v2.900h3.300V7.500zM1.300 11.900v2.900h3.300v-2.900zM5.800 11.900v2.900h3.300v-2.900zM10.400 11.900v2.900h3.300v-2.900zM14.900 11.900v2.900h3.300v-2.900zM1.300 16.300v2.900h3.300v-2.900zM5.800 16.300v2.900h3.300v-2.900zM10.400 16.300v2.900h3.300v-2.900zM14.900 16.300v2.900h3.300v-2.900z"/></svg>
<svg class="ic" style="left:1814.9px;top:471.41px;width:27.3px;height:18.1px" viewBox="0 0 27.5 18" fill="#555" color="#555" ><path fill-rule="evenodd" d="M1.5 0h24.5a1.5 1.5 0 0 1 1.5 1.5V4.6H0V1.5A1.5 1.5 0 0 1 1.5 0zM0 9.2h27.5v7.3a1.5 1.5 0 0 1-1.5 1.5H1.5A1.5 1.5 0 0 1 0 16.500zM3 13.700v1.400h3v-1.400zM7.900 13.700v1.400h4v-1.400z"/></svg>
<svg class="ic" style="left:1855.9px;top:471.71px;width:17.8px;height:17.6px" viewBox="0 0 18 18" fill="#555" color="#555" ><path d="M16.200 0 18 1.800 14 5.800 16.600 8.400H9.600V1.400L12.200 4zM1.800 18 0 16.200 4 12.200 1.400 9.600H8.400V16.600L5.800 14z"/></svg>
<svg class="ic" style="left:1887.2px;top:471.61px;width:13.8px;height:16.5px" viewBox="0 0 13.8 16.5" fill="#555" color="#555" ><path fill-rule="evenodd" d="M6.900 0a5.200 5.200 0 0 1 5.200 5.200V7.800h0.500a1.200 1.200 0 0 1 1.200 1.200V15.300a1.200 1.200 0 0 1-1.200 1.200H1.200A1.200 1.200 0 0 1 0 15.300V9a1.200 1.200 0 0 1 1.200-1.200h0.500V5.200A5.200 5.200 0 0 1 6.900 0zM6.900 2.400a2.800 2.800 0 0 0-2.800 2.800V7.800h5.600V5.200A2.800 2.800 0 0 0 6.900 2.400z"/></svg>
<svg class="ic" style="left:1917.2px;top:471.31px;width:18.7px;height:18.7px" viewBox="0 0 18.6 18.6" fill="#555" color="#555" ><g fill="none" stroke="currentColor"><circle cx="9.3" cy="9.3" r="5.00" stroke-width="4.00"/><path stroke-width="3.5" d="M15.30 9.30L18.60 9.30M13.54 13.54L15.88 15.88M9.30 15.30L9.30 18.60M5.06 13.54L2.72 15.88M3.30 9.30L0.00 9.30M5.06 5.06L2.72 2.72M9.30 3.30L9.30 0.00M13.54 5.06L15.88 2.72"/></g></svg>
<div class="row alt" style="top:521px;height:76px"></div>
<div class="sep" style="top:595px;background:rgba(0,0,0,0.031)"></div><div class="sep" style="top:596px;background:rgba(0,0,0,0.034)"></div>
<svg class="ic" style="left:35.9px;top:546.67px;width:23.6px;height:23.6px" viewBox="0 0 23.6 23.6" ><rect x="1.200" y="1.200" width="21.200" height="21.200" rx="4.300" fill="none" stroke="#8d8d8d" stroke-width="2.400"/></svg>
<span class="t" style="left:164.90px;top:533.00px;font-size:16px;line-height:20px;color:#4a4a4a;letter-spacing:-0.263px;">Amy Test</span>
<svg class="ic" style="left:164.4px;top:559.67px;width:18.1px;height:18.1px" viewBox="0 0 18 18" ><circle cx="9" cy="9" r="9" fill="#f5822a"/><path fill="#fff" d="M7.500 2.700h3v2.800H7.500zM6.100 6.800h4.700v5.700h1.400v2.200H5.900v-2.200h1.600V9H6.100z"/></svg>
<svg class="ic" style="left:200.9px;top:558.87px;width:18.2px;height:21.4px" viewBox="0 0 18.2 21.4" ><g fill="none" stroke="#0c7c16"><rect x="-6.200" y="-6.200" width="12.400" height="12.400" rx="1.300" stroke-width="1.300" transform="translate(9.100 9.200) rotate(45)"/><rect x="-4.900" y="-4.900" width="9.800" height="9.800" rx="0.800" stroke-width="0.900" stroke-dasharray="1.400 0.500" transform="translate(9.100 9.200) rotate(45)"/></g><g fill="#0c7c16"><path d="M14.300 6.900 18.300 11.500a1.200 1.200 0 0 1 0 1.500L11.600 18.300 9.300 17.600 14.600 12.300 12.500 8.700z"/><rect x="-1.900" y="-1.900" width="3.800" height="3.800" rx="0.400" transform="translate(7.600 12.900) rotate(45)"/><circle cx="4.900" cy="9.900" r="1.050"/><rect x="-1.800" y="-1.800" width="3.600" height="3.600" opacity="0.700" transform="translate(10.700 6.200) rotate(45)"/><rect x="5.300" y="18.900" width="8.800" height="2.400" rx="1.100"/></g></svg>
<svg class="ic" style="left:237.2px;top:559.67px;width:18px;height:18px" viewBox="0 0 18 18" ><circle cx="9" cy="9" r="8.800" fill="#7094d0"/></svg>
<span class="t" style="left:502.50px;top:549.00px;font-size:16px;line-height:20px;color:#4a4a4a;letter-spacing:-0.133px;">amytest@gmail.com</span>
<span class="t" style="left:779.00px;top:549.00px;font-size:16px;line-height:20px;color:#4a4a4a;letter-spacing:0.002px;">4426654</span>
<svg class="ic" style="left:1177.6px;top:547.37px;width:18.2px;height:18.2px" viewBox="0 0 18 18" ><circle cx="9" cy="9" r="9" fill="#e9141d"/><path fill="#fff" d="M4.300 6.300 6.300 4.300 9 7 11.700 4.300 13.700 6.300 11 9 13.700 11.700 11.700 13.700 9 11 6.300 13.700 4.300 11.700 7 9z"/></svg>
<span class="t" style="left:1199.70px;top:549.00px;font-size:16px;line-height:20px;color:#4a4a4a;letter-spacing:-0.032px;">2032527890</span>
<svg class="ic" style="left:1719px;top:545.97px;width:18.2px;height:21px" viewBox="0 0 18 21" fill="#555" color="#555" ><path d="M1 0h9.5v6.5H18V20a1 1 0 0 1-1 1H1a1 1 0 0 1-1-1V1a1 1 0 0 1 1-1z"/><path d="M12 0.3 17.7 5H12z"/></svg>
<svg class="ic" style="left:1750.3px;top:547.17px;width:18.2px;height:18.2px" viewBox="0 0 18 18" fill="#555" color="#555" ><path fill-rule="evenodd" d="M9 0a9 9 0 1 0 0 18A9 9 0 0 0 9 0zM7.6 3.2h3v2.6h-3zM6.3 7.2h4.4v5.6h1.3v2H6.1v-2h1.6V9.2H6.3z"/></svg>
<svg class="ic" style="left:1782px;top:545.87px;width:19.5px;height:21.2px" viewBox="0 0 19.5 21.2" fill="#555" color="#555" ><path fill-rule="evenodd" d="M3.200 1.950a1.950 1.950 0 0 1 3.900 0V3.400h5.300V1.950a1.950 1.950 0 0 1 3.900 0V3.400H18a1.500 1.500 0 0 1 1.500 1.500V19.700a1.500 1.500 0 0 1-1.500 1.500H1.500A1.500 1.500 0 0 1 0 19.700V4.900a1.500 1.500 0 0 1 1.500-1.500h1.700zM4.500 1.950v2.800a0.650 0.650 0 0 0 1.300 0V1.950a0.650 0.650 0 0 0-1.300 0zM13.700 1.950v2.800a0.650 0.650 0 0 0 1.300 0V1.950a0.650 0.650 0 0 0-1.300 0zM1.300 7.500v2.900h3.300V7.500zM5.800 7.500v2.900h3.300V7.500zM10.400 7.500v2.900h3.300V7.500zM14.900 7.500v2.900h3.300V7.500zM1.300 11.900v2.900h3.300v-2.900zM5.800 11.900v2.900h3.300v-2.900zM10.400 11.900v2.900h3.300v-2.900zM14.900 11.900v2.900h3.300v-2.900zM1.300 16.300v2.900h3.300v-2.900zM5.800 16.300v2.900h3.300v-2.900zM10.400 16.300v2.900h3.300v-2.900zM14.900 16.300v2.900h3.300v-2.900z"/></svg>
<svg class="ic" style="left:1814.9px;top:547.17px;width:27.3px;height:18.1px" viewBox="0 0 27.5 18" fill="#555" color="#555" ><path fill-rule="evenodd" d="M1.5 0h24.5a1.5 1.5 0 0 1 1.5 1.5V4.6H0V1.5A1.5 1.5 0 0 1 1.5 0zM0 9.2h27.5v7.3a1.5 1.5 0 0 1-1.5 1.5H1.5A1.5 1.5 0 0 1 0 16.500zM3 13.700v1.400h3v-1.400zM7.900 13.700v1.400h4v-1.400z"/></svg>
<svg class="ic" style="left:1855.9px;top:547.47px;width:17.8px;height:17.6px" viewBox="0 0 18 18" fill="#555" color="#555" ><path d="M16.200 0 18 1.800 14 5.800 16.600 8.400H9.600V1.400L12.200 4zM1.800 18 0 16.200 4 12.200 1.400 9.600H8.400V16.600L5.800 14z"/></svg>
<svg class="ic" style="left:1887.2px;top:547.37px;width:13.8px;height:16.5px" viewBox="0 0 13.8 16.5" fill="#555" color="#555" ><path fill-rule="evenodd" d="M6.900 0a5.200 5.200 0 0 1 5.200 5.200V7.800h0.500a1.200 1.200 0 0 1 1.200 1.200V15.300a1.200 1.200 0 0 1-1.200 1.200H1.200A1.200 1.200 0 0 1 0 15.300V9a1.200 1.200 0 0 1 1.200-1.200h0.500V5.200A5.200 5.200 0 0 1 6.900 0zM6.900 2.400a2.800 2.800 0 0 0-2.800 2.800V7.800h5.600V5.200A2.800 2.800 0 0 0 6.900 2.400z"/></svg>
<svg class="ic" style="left:1917.2px;top:547.07px;width:18.7px;height:18.7px" viewBox="0 0 18.6 18.6" fill="#555" color="#555" ><g fill="none" stroke="currentColor"><circle cx="9.3" cy="9.3" r="5.00" stroke-width="4.00"/><path stroke-width="3.5" d="M15.30 9.30L18.60 9.30M13.54 13.54L15.88 15.88M9.30 15.30L9.30 18.60M5.06 13.54L2.72 15.88M3.30 9.30L0.00 9.30M5.06 5.06L2.72 2.72M9.30 3.30L9.30 0.00M13.54 5.06L15.88 2.72"/></g></svg>
<div class="row" style="top:597px;height:75px"></div>
<div class="sep" style="top:671px;background:rgba(0,0,0,0.046)"></div><div class="sep" style="top:672px;background:rgba(0,0,0,0.019)"></div>
<svg class="ic" style="left:35.9px;top:622.43px;width:23.6px;height:23.6px" viewBox="0 0 23.6 23.6" ><rect x="1.200" y="1.200" width="21.200" height="21.200" rx="4.300" fill="none" stroke="#8d8d8d" stroke-width="2.400"/></svg>
<span class="t" style="left:164.90px;top:609.00px;font-size:16px;line-height:20px;color:#4a4a4a;letter-spacing:-0.295px;">Anisha G</span>
<svg class="ic" style="left:166.2px;top:634.63px;width:18.2px;height:21.4px" viewBox="0 0 18.2 21.4" ><g fill="none" stroke="#0c7c16"><rect x="-6.200" y="-6.200" width="12.400" height="12.400" rx="1.300" stroke-width="1.300" transform="translate(9.100 9.200) rotate(45)"/><rect x="-4.900" y="-4.900" width="9.800" height="9.800" rx="0.800" stroke-width="0.900" stroke-dasharray="1.400 0.500" transform="translate(9.100 9.200) rotate(45)"/></g><g fill="#0c7c16"><path d="M14.300 6.900 18.300 11.500a1.200 1.200 0 0 1 0 1.500L11.600 18.300 9.300 17.600 14.600 12.300 12.500 8.700z"/><rect x="-1.900" y="-1.900" width="3.800" height="3.800" rx="0.400" transform="translate(7.600 12.900) rotate(45)"/><circle cx="4.900" cy="9.900" r="1.050"/><rect x="-1.800" y="-1.800" width="3.600" height="3.600" opacity="0.700" transform="translate(10.700 6.200) rotate(45)"/><rect x="5.300" y="18.900" width="8.800" height="2.400" rx="1.100"/></g></svg>
<span class="t" style="left:501.50px;top:625.00px;font-size:16px;line-height:20px;color:#4a4a4a;letter-spacing:-0.321px;">nishipooooo+1@gmail.com</span>
<span class="t" style="left:779.00px;top:625.00px;font-size:16px;line-height:20px;color:#4a4a4a;letter-spacing:-0.248px;">2652324</span>
<svg class="ic" style="left:1177.6px;top:623.13px;width:18.2px;height:18.2px" viewBox="0 0 18 18" ><circle cx="9" cy="9" r="9" fill="#e9141d"/><path fill="#fff" d="M4.300 6.300 6.300 4.300 9 7 11.700 4.300 13.700 6.300 11 9 13.700 11.700 11.700 13.700 9 11 6.300 13.700 4.300 11.700 7 9z"/></svg>
<span class="t" style="left:1199.70px;top:625.00px;font-size:16px;line-height:20px;color:#4a4a4a;letter-spacing:-0.454px;">0123456789</span>
<svg class="ic" style="left:1719px;top:621.73px;width:18.2px;height:21px" viewBox="0 0 18 21" fill="#555" color="#555" ><path d="M1 0h9.5v6.5H18V20a1 1 0 0 1-1 1H1a1 1 0 0 1-1-1V1a1 1 0 0 1 1-1z"/><path d="M12 0.3 17.7 5H12z"/></svg>
<svg class="ic" style="left:1750.3px;top:622.93px;width:18.2px;height:18.2px" viewBox="0 0 18 18" fill="#555" color="#555" ><path fill-rule="evenodd" d="M9 0a9 9 0 1 0 0 18A9 9 0 0 0 9 0zM7.6 3.2h3v2.6h-3zM6.3 7.2h4.4v5.6h1.3v2H6.1v-2h1.6V9.2H6.3z"/></svg>
<svg class="ic" style="left:1782px;top:621.63px;width:19.5px;height:21.2px" viewBox="0 0 19.5 21.2" fill="#555" color="#555" ><path fill-rule="evenodd" d="M3.200 1.950a1.950 1.950 0 0 1 3.900 0V3.400h5.300V1.950a1.950 1.950 0 0 1 3.900 0V3.400H18a1.500 1.500 0 0 1 1.500 1.500V19.700a1.500 1.500 0 0 1-1.500 1.500H1.500A1.500 1.500 0 0 1 0 19.700V4.900a1.500 1.500 0 0 1 1.500-1.500h1.700zM4.500 1.950v2.800a0.650 0.650 0 0 0 1.300 0V1.950a0.650 0.650 0 0 0-1.300 0zM13.700 1.950v2.800a0.650 0.650 0 0 0 1.300 0V1.950a0.650 0.650 0 0 0-1.300 0zM1.300 7.500v2.900h3.300V7.500zM5.800 7.500v2.900h3.300V7.500zM10.400 7.500v2.900h3.300V7.500zM14.900 7.500v2.900h3.300V7.500zM1.300 11.900v2.900h3.300v-2.900zM5.800 11.900v2.900h3.300v-2.900zM10.400 11.900v2.900h3.300v-2.900zM14.900 11.900v2.900h3.300v-2.900zM1.300 16.300v2.900h3.300v-2.900zM5.800 16.300v2.900h3.300v-2.900zM10.400 16.300v2.900h3.300v-2.900zM14.900 16.300v2.900h3.300v-2.900z"/></svg>
<svg class="ic" style="left:1814.9px;top:622.93px;width:27.3px;height:18.1px" viewBox="0 0 27.5 18" fill="#555" color="#555" ><path fill-rule="evenodd" d="M1.5 0h24.5a1.5 1.5 0 0 1 1.5 1.5V4.6H0V1.5A1.5 1.5 0 0 1 1.5 0zM0 9.2h27.5v7.3a1.5 1.5 0 0 1-1.5 1.5H1.5A1.5 1.5 0 0 1 0 16.500zM3 13.700v1.400h3v-1.400zM7.900 13.700v1.400h4v-1.400z"/></svg>
<svg class="ic" style="left:1855.9px;top:623.23px;width:17.8px;height:17.6px" viewBox="0 0 18 18" fill="#555" color="#555" ><path d="M16.200 0 18 1.800 14 5.800 16.600 8.400H9.600V1.400L12.200 4zM1.800 18 0 16.200 4 12.200 1.400 9.600H8.400V16.600L5.800 14z"/></svg>
<svg class="ic" style="left:1887.2px;top:623.13px;width:13.8px;height:16.5px" viewBox="0 0 13.8 16.5" fill="#555" color="#555" ><path fill-rule="evenodd" d="M6.900 0a5.200 5.200 0 0 1 5.200 5.200V7.800h0.500a1.200 1.200 0 0 1 1.200 1.200V15.300a1.200 1.200 0 0 1-1.200 1.200H1.200A1.200 1.200 0 0 1 0 15.300V9a1.200 1.200 0 0 1 1.200-1.200h0.500V5.200A5.200 5.200 0 0 1 6.900 0zM6.900 2.400a2.800 2.800 0 0 0-2.800 2.800V7.800h5.600V5.200A2.800 2.800 0 0 0 6.900 2.400z"/></svg>
<svg class="ic" style="left:1917.2px;top:622.83px;width:18.7px;height:18.7px" viewBox="0 0 18.6 18.6" fill="#555" color="#555" ><g fill="none" stroke="currentColor"><circle cx="9.3" cy="9.3" r="5.00" stroke-width="4.00"/><path stroke-width="3.5" d="M15.30 9.30L18.60 9.30M13.54 13.54L15.88 15.88M9.30 15.30L9.30 18.60M5.06 13.54L2.72 15.88M3.30 9.30L0.00 9.30M5.06 5.06L2.72 2.72M9.30 3.30L9.30 0.00M13.54 5.06L15.88 2.72"/></g></svg>
<div class="row alt" style="top:672px;height:76px"></div>
<div class="sep" style="top:747px;background:rgba(0,0,0,0.062)"></div><div class="sep" style="top:748px;background:rgba(0,0,0,0.003)"></div>
<svg class="ic" style="left:35.9px;top:698.19px;width:23.6px;height:23.6px" viewBox="0 0 23.6 23.6" ><rect x="1.200" y="1.200" width="21.200" height="21.200" rx="4.300" fill="none" stroke="#8d8d8d" stroke-width="2.400"/></svg>
<span class="t" style="left:164.90px;top:685.00px;font-size:16px;line-height:20px;color:#4a4a4a;letter-spacing:-0.157px;">Anjali Rajput</span>
<svg class="ic" style="left:166.2px;top:710.39px;width:18.2px;height:21.4px" viewBox="0 0 18.2 21.4" ><g fill="none" stroke="#0c7c16"><rect x="-6.200" y="-6.200" width="12.400" height="12.400" rx="1.300" stroke-width="1.300" transform="translate(9.100 9.200) rotate(45)"/><rect x="-4.900" y="-4.900" width="9.800" height="9.800" rx="0.800" stroke-width="0.900" stroke-dasharray="1.400 0.500" transform="translate(9.100 9.200) rotate(45)"/></g><g fill="#0c7c16"><path d="M14.300 6.900 18.300 11.500a1.200 1.200 0 0 1 0 1.500L11.600 18.300 9.300 17.600 14.600 12.300 12.500 8.700z"/><rect x="-1.900" y="-1.900" width="3.800" height="3.800" rx="0.400" transform="translate(7.600 12.900) rotate(45)"/><circle cx="4.900" cy="9.900" r="1.050"/><rect x="-1.800" y="-1.800" width="3.600" height="3.600" opacity="0.700" transform="translate(10.700 6.200) rotate(45)"/><rect x="5.300" y="18.900" width="8.800" height="2.400" rx="1.100"/></g></svg>
<span class="t" style="left:502.50px;top:700.00px;font-size:16px;line-height:20px;color:#4a4a4a;letter-spacing:-0.104px;">anjali.rajput+test123@hapana.com</span>
<span class="t" style="left:778.00px;top:700.00px;font-size:16px;line-height:20px;color:#4a4a4a;letter-spacing:-1.600px;">1547511</span>
<span class="t" style="left:978.00px;top:700.00px;font-size:16px;line-height:20px;color:#4a4a4a;letter-spacing:-0.191px;">Female</span>
<svg class="ic" style="left:1719px;top:697.49px;width:18.2px;height:21px" viewBox="0 0 18 21" fill="#555" color="#555" ><path d="M1 0h9.5v6.5H18V20a1 1 0 0 1-1 1H1a1 1 0 0 1-1-1V1a1 1 0 0 1 1-1z"/><path d="M12 0.3 17.7 5H12z"/></svg>
<svg class="ic" style="left:1750.3px;top:698.69px;width:18.2px;height:18.2px" viewBox="0 0 18 18" fill="#555" color="#555" ><path fill-rule="evenodd" d="M9 0a9 9 0 1 0 0 18A9 9 0 0 0 9 0zM7.6 3.2h3v2.6h-3zM6.3 7.2h4.4v5.6h1.3v2H6.1v-2h1.6V9.2H6.3z"/></svg>
<svg class="ic" style="left:1782px;top:697.39px;width:19.5px;height:21.2px" viewBox="0 0 19.5 21.2" fill="#555" color="#555" ><path fill-rule="evenodd" d="M3.200 1.950a1.950 1.950 0 0 1 3.900 0V3.400h5.300V1.950a1.950 1.950 0 0 1 3.900 0V3.400H18a1.500 1.500 0 0 1 1.500 1.500V19.700a1.500 1.500 0 0 1-1.500 1.500H1.500A1.500 1.500 0 0 1 0 19.700V4.900a1.500 1.500 0 0 1 1.500-1.500h1.700zM4.500 1.950v2.800a0.650 0.650 0 0 0 1.300 0V1.950a0.650 0.650 0 0 0-1.300 0zM13.700 1.950v2.800a0.650 0.650 0 0 0 1.300 0V1.950a0.650 0.650 0 0 0-1.300 0zM1.300 7.500v2.900h3.300V7.500zM5.800 7.500v2.900h3.300V7.500zM10.400 7.500v2.900h3.300V7.500zM14.900 7.500v2.900h3.300V7.500zM1.300 11.900v2.900h3.300v-2.900zM5.800 11.900v2.900h3.300v-2.900zM10.400 11.900v2.900h3.300v-2.900zM14.900 11.900v2.900h3.300v-2.900zM1.300 16.300v2.900h3.300v-2.900zM5.800 16.300v2.900h3.300v-2.900zM10.400 16.300v2.900h3.300v-2.900zM14.900 16.300v2.900h3.300v-2.900z"/></svg>
<svg class="ic" style="left:1814.9px;top:698.69px;width:27.3px;height:18.1px" viewBox="0 0 27.5 18" fill="#555" color="#555" ><path fill-rule="evenodd" d="M1.5 0h24.5a1.5 1.5 0 0 1 1.5 1.5V4.6H0V1.5A1.5 1.5 0 0 1 1.5 0zM0 9.2h27.5v7.3a1.5 1.5 0 0 1-1.5 1.5H1.5A1.5 1.5 0 0 1 0 16.500zM3 13.700v1.400h3v-1.400zM7.900 13.700v1.400h4v-1.400z"/></svg>
<svg class="ic" style="left:1855.9px;top:698.99px;width:17.8px;height:17.6px" viewBox="0 0 18 18" fill="#555" color="#555" ><path d="M16.200 0 18 1.800 14 5.800 16.600 8.400H9.600V1.400L12.200 4zM1.800 18 0 16.200 4 12.200 1.400 9.600H8.400V16.600L5.800 14z"/></svg>
<svg class="ic" style="left:1887.2px;top:698.89px;width:13.8px;height:16.5px" viewBox="0 0 13.8 16.5" fill="#555" color="#555" ><path fill-rule="evenodd" d="M6.900 0a5.200 5.200 0 0 1 5.200 5.200V7.800h0.500a1.200 1.200 0 0 1 1.200 1.200V15.300a1.200 1.200 0 0 1-1.200 1.200H1.200A1.200 1.200 0 0 1 0 15.300V9a1.200 1.200 0 0 1 1.200-1.200h0.500V5.200A5.200 5.200 0 0 1 6.900 0zM6.900 2.400a2.800 2.800 0 0 0-2.800 2.800V7.800h5.600V5.200A2.800 2.800 0 0 0 6.900 2.400z"/></svg>
<svg class="ic" style="left:1917.2px;top:698.59px;width:18.7px;height:18.7px" viewBox="0 0 18.6 18.6" fill="#555" color="#555" ><g fill="none" stroke="currentColor"><circle cx="9.3" cy="9.3" r="5.00" stroke-width="4.00"/><path stroke-width="3.5" d="M15.30 9.30L18.60 9.30M13.54 13.54L15.88 15.88M9.30 15.30L9.30 18.60M5.06 13.54L2.72 15.88M3.30 9.30L0.00 9.30M5.06 5.06L2.72 2.72M9.30 3.30L9.30 0.00M13.54 5.06L15.88 2.72"/></g></svg>
<div class="row" style="top:748px;height:76px"></div>
<div class="sep" style="top:822px;background:rgba(0,0,0,0.012)"></div><div class="sep" style="top:823px;background:rgba(0,0,0,0.053)"></div>
<svg class="ic" style="left:35.9px;top:773.95px;width:23.6px;height:23.6px" viewBox="0 0 23.6 23.6" ><rect x="1.200" y="1.200" width="21.200" height="21.200" rx="4.300" fill="none" stroke="#8d8d8d" stroke-width="2.400"/></svg>
<span class="t" style="left:164.90px;top:761.00px;font-size:16px;line-height:20px;color:#4a4a4a;letter-spacing:-0.453px;">Atul Roy</span>
<svg class="ic" style="left:166.2px;top:786.15px;width:18.2px;height:21.4px" viewBox="0 0 18.2 21.4" ><g fill="none" stroke="#0c7c16"><rect x="-6.200" y="-6.200" width="12.400" height="12.400" rx="1.300" stroke-width="1.300" transform="translate(9.100 9.200) rotate(45)"/><rect x="-4.900" y="-4.900" width="9.800" height="9.800" rx="0.800" stroke-width="0.900" stroke-dasharray="1.400 0.500" transform="translate(9.100 9.200) rotate(45)"/></g><g fill="#0c7c16"><path d="M14.300 6.900 18.300 11.500a1.200 1.200 0 0 1 0 1.500L11.600 18.300 9.300 17.600 14.600 12.300 12.500 8.700z"/><rect x="-1.900" y="-1.900" width="3.800" height="3.800" rx="0.400" transform="translate(7.600 12.900) rotate(45)"/><circle cx="4.900" cy="9.900" r="1.050"/><rect x="-1.800" y="-1.800" width="3.600" height="3.600" opacity="0.700" transform="translate(10.700 6.200) rotate(45)"/><rect x="5.300" y="18.900" width="8.800" height="2.400" rx="1.100"/></g></svg>
<span class="t" style="left:502.50px;top:776.00px;font-size:16px;line-height:20px;color:#4a4a4a;letter-spacing:-0.021px;">atul.kumar+client2@onefitstop.com</span>
<span class="t" style="left:778.00px;top:776.00px;font-size:16px;line-height:20px;color:#4a4a4a;letter-spacing:-0.778px;">163823</span>
<span class="t" style="left:978.00px;top:776.00px;font-size:16px;line-height:20px;color:#4a4a4a;letter-spacing:-0.094px;">Male</span>
<svg class="ic" style="left:1177.6px;top:774.65px;width:18.2px;height:18.2px" viewBox="0 0 18 18" ><circle cx="9" cy="9" r="9" fill="#7097d4"/><path fill="#fff" d="M4 9.200 5.800 7.400 8 9.700 13.300 4.400 15 6.200 8 13.200z"/></svg>
<span class="t" style="left:1199.70px;top:776.00px;font-size:16px;line-height:20px;color:#4a4a4a;letter-spacing:0.302px;">424240067</span>
<svg class="ic" style="left:1719px;top:773.25px;width:18.2px;height:21px" viewBox="0 0 18 21" fill="#555" color="#555" ><path d="M1 0h9.5v6.5H18V20a1 1 0 0 1-1 1H1a1 1 0 0 1-1-1V1a1 1 0 0 1 1-1z"/><path d="M12 0.3 17.7 5H12z"/></svg>
<svg class="ic" style="left:1750.3px;top:774.45px;width:18.2px;height:18.2px" viewBox="0 0 18 18" fill="#555" color="#555" ><path fill-rule="evenodd" d="M9 0a9 9 0 1 0 0 18A9 9 0 0 0 9 0zM7.6 3.2h3v2.6h-3zM6.3 7.2h4.4v5.6h1.3v2H6.1v-2h1.6V9.2H6.3z"/></svg>
<svg class="ic" style="left:1782px;top:773.15px;width:19.5px;height:21.2px" viewBox="0 0 19.5 21.2" fill="#555" color="#555" ><path fill-rule="evenodd" d="M3.200 1.950a1.950 1.950 0 0 1 3.900 0V3.400h5.300V1.950a1.950 1.950 0 0 1 3.900 0V3.400H18a1.500 1.500 0 0 1 1.500 1.500V19.700a1.500 1.500 0 0 1-1.500 1.500H1.500A1.500 1.500 0 0 1 0 19.700V4.900a1.500 1.500 0 0 1 1.500-1.500h1.700zM4.500 1.950v2.800a0.650 0.650 0 0 0 1.300 0V1.950a0.650 0.650 0 0 0-1.300 0zM13.700 1.950v2.800a0.650 0.650 0 0 0 1.300 0V1.950a0.650 0.650 0 0 0-1.300 0zM1.300 7.500v2.900h3.300V7.500zM5.800 7.500v2.900h3.300V7.500zM10.400 7.500v2.900h3.300V7.500zM14.900 7.500v2.900h3.300V7.500zM1.300 11.900v2.900h3.300v-2.900zM5.800 11.900v2.900h3.300v-2.900zM10.400 11.900v2.900h3.300v-2.900zM14.900 11.900v2.900h3.300v-2.900zM1.300 16.300v2.900h3.300v-2.900zM5.800 16.300v2.900h3.300v-2.900zM10.400 16.300v2.900h3.300v-2.900zM14.900 16.300v2.900h3.300v-2.900z"/></svg>
<svg class="ic" style="left:1814.9px;top:774.45px;width:27.3px;height:18.1px" viewBox="0 0 27.5 18" fill="#555" color="#555" ><path fill-rule="evenodd" d="M1.5 0h24.5a1.5 1.5 0 0 1 1.5 1.5V4.6H0V1.5A1.5 1.5 0 0 1 1.5 0zM0 9.2h27.5v7.3a1.5 1.5 0 0 1-1.5 1.5H1.5A1.5 1.5 0 0 1 0 16.500zM3 13.700v1.400h3v-1.400zM7.900 13.700v1.400h4v-1.400z"/></svg>
<svg class="ic" style="left:1855.9px;top:774.75px;width:17.8px;height:17.6px" viewBox="0 0 18 18" fill="#555" color="#555" ><path d="M16.200 0 18 1.800 14 5.800 16.600 8.400H9.600V1.400L12.200 4zM1.800 18 0 16.200 4 12.200 1.400 9.600H8.400V16.600L5.800 14z"/></svg>
<svg class="ic" style="left:1887.2px;top:774.65px;width:13.8px;height:16.5px" viewBox="0 0 13.8 16.5" fill="#555" color="#555" ><path fill-rule="evenodd" d="M6.900 0a5.200 5.200 0 0 1 5.200 5.200V7.800h0.500a1.200 1.200 0 0 1 1.200 1.200V15.300a1.200 1.200 0 0 1-1.200 1.200H1.200A1.200 1.200 0 0 1 0 15.300V9a1.200 1.200 0 0 1 1.200-1.200h0.500V5.200A5.200 5.200 0 0 1 6.900 0zM6.900 2.400a2.800 2.800 0 0 0-2.800 2.800V7.800h5.600V5.200A2.800 2.800 0 0 0 6.900 2.400z"/></svg>
<svg class="ic" style="left:1917.2px;top:774.35px;width:18.7px;height:18.7px" viewBox="0 0 18.6 18.6" fill="#555" color="#555" ><g fill="none" stroke="currentColor"><circle cx="9.3" cy="9.3" r="5.00" stroke-width="4.00"/><path stroke-width="3.5" d="M15.30 9.30L18.60 9.30M13.54 13.54L15.88 15.88M9.30 15.30L9.30 18.60M5.06 13.54L2.72 15.88M3.30 9.30L0.00 9.30M5.06 5.06L2.72 2.72M9.30 3.30L9.30 0.00M13.54 5.06L15.88 2.72"/></g></svg>
<div class="row alt" style="top:824px;height:76px"></div>
<div class="sep" style="top:898px;background:rgba(0,0,0,0.028)"></div><div class="sep" style="top:899px;background:rgba(0,0,0,0.037)"></div>
<svg class="ic" style="left:35.9px;top:849.71px;width:23.6px;height:23.6px" viewBox="0 0 23.6 23.6" ><rect x="1.200" y="1.200" width="21.200" height="21.200" rx="4.300" fill="none" stroke="#8d8d8d" stroke-width="2.400"/></svg>
<span class="t" style="left:164.90px;top:836.00px;font-size:16px;line-height:20px;color:#4a4a4a;letter-spacing:-0.126px;">Atul Zapier 2</span>
<svg class="ic" style="left:166.2px;top:861.91px;width:18.2px;height:21.4px" viewBox="0 0 18.2 21.4" ><g fill="none" stroke="#0c7c16"><rect x="-6.200" y="-6.200" width="12.400" height="12.400" rx="1.300" stroke-width="1.300" transform="translate(9.100 9.200) rotate(45)"/><rect x="-4.900" y="-4.900" width="9.800" height="9.800" rx="0.800" stroke-width="0.900" stroke-dasharray="1.400 0.500" transform="translate(9.100 9.200) rotate(45)"/></g><g fill="#0c7c16"><path d="M14.300 6.900 18.300 11.500a1.200 1.200 0 0 1 0 1.500L11.600 18.300 9.300 17.600 14.600 12.300 12.500 8.700z"/><rect x="-1.900" y="-1.900" width="3.800" height="3.800" rx="0.400" transform="translate(7.600 12.900) rotate(45)"/><circle cx="4.900" cy="9.900" r="1.050"/><rect x="-1.800" y="-1.800" width="3.600" height="3.600" opacity="0.700" transform="translate(10.700 6.200) rotate(45)"/><rect x="5.300" y="18.900" width="8.800" height="2.400" rx="1.100"/></g></svg>
<svg class="ic" style="left:201.6px;top:862.71px;width:18px;height:18px" viewBox="0 0 18 18" ><circle cx="9" cy="9" r="8.800" fill="#7094d0"/></svg>
<span class="t" style="left:502.50px;top:852.00px;font-size:16px;line-height:20px;color:#4a4a4a;letter-spacing:-0.019px;">atul.zapier2@onefitstop.com</span>
<span class="t" style="left:779.00px;top:852.00px;font-size:16px;line-height:20px;color:#4a4a4a;letter-spacing:-1.158px;">971552</span>
<svg class="ic" style="left:1719px;top:849.01px;width:18.2px;height:21px" viewBox="0 0 18 21" fill="#555" color="#555" ><path d="M1 0h9.5v6.5H18V20a1 1 0 0 1-1 1H1a1 1 0 0 1-1-1V1a1 1 0 0 1 1-1z"/><path d="M12 0.3 17.7 5H12z"/></svg>
<svg class="ic" style="left:1750.3px;top:850.21px;width:18.2px;height:18.2px" viewBox="0 0 18 18" fill="#555" color="#555" ><path fill-rule="evenodd" d="M9 0a9 9 0 1 0 0 18A9 9 0 0 0 9 0zM7.6 3.2h3v2.6h-3zM6.3 7.2h4.4v5.6h1.3v2H6.1v-2h1.6V9.2H6.3z"/></svg>
<svg class="ic" style="left:1782px;top:848.91px;width:19.5px;height:21.2px" viewBox="0 0 19.5 21.2" fill="#555" color="#555" ><path fill-rule="evenodd" d="M3.200 1.950a1.950 1.950 0 0 1 3.900 0V3.400h5.300V1.950a1.950 1.950 0 0 1 3.900 0V3.400H18a1.500 1.500 0 0 1 1.500 1.500V19.700a1.500 1.500 0 0 1-1.500 1.500H1.500A1.500 1.500 0 0 1 0 19.700V4.900a1.500 1.500 0 0 1 1.500-1.500h1.700zM4.500 1.950v2.800a0.650 0.650 0 0 0 1.300 0V1.950a0.650 0.650 0 0 0-1.300 0zM13.700 1.950v2.800a0.650 0.650 0 0 0 1.300 0V1.950a0.650 0.650 0 0 0-1.300 0zM1.300 7.500v2.900h3.300V7.500zM5.800 7.500v2.900h3.300V7.500zM10.400 7.500v2.900h3.300V7.500zM14.900 7.500v2.900h3.300V7.500zM1.300 11.900v2.900h3.300v-2.900zM5.800 11.900v2.900h3.300v-2.900zM10.400 11.900v2.900h3.300v-2.900zM14.900 11.900v2.900h3.300v-2.900zM1.300 16.300v2.900h3.300v-2.900zM5.800 16.300v2.900h3.300v-2.900zM10.400 16.300v2.900h3.300v-2.900zM14.900 16.300v2.900h3.300v-2.900z"/></svg>
<svg class="ic" style="left:1814.9px;top:850.21px;width:27.3px;height:18.1px" viewBox="0 0 27.5 18" fill="#555" color="#555" ><path fill-rule="evenodd" d="M1.5 0h24.5a1.5 1.5 0 0 1 1.5 1.5V4.6H0V1.5A1.5 1.5 0 0 1 1.5 0zM0 9.2h27.5v7.3a1.5 1.5 0 0 1-1.5 1.5H1.5A1.5 1.5 0 0 1 0 16.500zM3 13.700v1.400h3v-1.400zM7.900 13.700v1.400h4v-1.400z"/></svg>
<svg class="ic" style="left:1855.9px;top:850.51px;width:17.8px;height:17.6px" viewBox="0 0 18 18" fill="#555" color="#555" ><path d="M16.200 0 18 1.800 14 5.800 16.600 8.400H9.600V1.400L12.200 4zM1.800 18 0 16.200 4 12.200 1.400 9.600H8.400V16.600L5.800 14z"/></svg>
<svg class="ic" style="left:1887.2px;top:850.41px;width:13.8px;height:16.5px" viewBox="0 0 13.8 16.5" fill="#555" color="#555" ><path fill-rule="evenodd" d="M6.900 0a5.200 5.200 0 0 1 5.200 5.200V7.800h0.500a1.200 1.200 0 0 1 1.200 1.200V15.300a1.200 1.200 0 0 1-1.200 1.200H1.200A1.200 1.200 0 0 1 0 15.300V9a1.200 1.200 0 0 1 1.200-1.200h0.500V5.200A5.200 5.200 0 0 1 6.900 0zM6.900 2.400a2.800 2.800 0 0 0-2.800 2.800V7.800h5.600V5.200A2.800 2.800 0 0 0 6.900 2.400z"/></svg>
<svg class="ic" style="left:1917.2px;top:850.11px;width:18.7px;height:18.7px" viewBox="0 0 18.6 18.6" fill="#555" color="#555" ><g fill="none" stroke="currentColor"><circle cx="9.3" cy="9.3" r="5.00" stroke-width="4.00"/><path stroke-width="3.5" d="M15.30 9.30L18.60 9.30M13.54 13.54L15.88 15.88M9.30 15.30L9.30 18.60M5.06 13.54L2.72 15.88M3.30 9.30L0.00 9.30M5.06 5.06L2.72 2.72M9.30 3.30L9.30 0.00M13.54 5.06L15.88 2.72"/></g></svg>
<div class="row" style="top:900px;height:75px"></div>
<div class="sep" style="top:974px;background:rgba(0,0,0,0.044)"></div><div class="sep" style="top:975px;background:rgba(0,0,0,0.021)"></div>
<svg class="ic" style="left:35.9px;top:925.47px;width:23.6px;height:23.6px" viewBox="0 0 23.6 23.6" ><rect x="1.200" y="1.200" width="21.200" height="21.200" rx="4.300" fill="none" stroke="#8d8d8d" stroke-width="2.400"/></svg>
<span class="t" style="left:163.90px;top:912.00px;font-size:16px;line-height:20px;color:#4a4a4a;letter-spacing:-0.195px;">Bar Code Test</span>
<svg class="ic" style="left:166.2px;top:937.67px;width:18.2px;height:21.4px" viewBox="0 0 18.2 21.4" ><g fill="none" stroke="#0c7c16"><rect x="-6.200" y="-6.200" width="12.400" height="12.400" rx="1.300" stroke-width="1.300" transform="translate(9.100 9.200) rotate(45)"/><rect x="-4.900" y="-4.900" width="9.800" height="9.800" rx="0.800" stroke-width="0.900" stroke-dasharray="1.400 0.500" transform="translate(9.100 9.200) rotate(45)"/></g><g fill="#0c7c16"><path d="M14.300 6.900 18.300 11.500a1.200 1.200 0 0 1 0 1.500L11.600 18.300 9.300 17.600 14.600 12.300 12.500 8.700z"/><rect x="-1.900" y="-1.900" width="3.800" height="3.800" rx="0.400" transform="translate(7.600 12.900) rotate(45)"/><circle cx="4.900" cy="9.900" r="1.050"/><rect x="-1.800" y="-1.800" width="3.600" height="3.600" opacity="0.700" transform="translate(10.700 6.200) rotate(45)"/><rect x="5.300" y="18.900" width="8.800" height="2.400" rx="1.100"/></g></svg>
<span class="t" style="left:501.50px;top:928.00px;font-size:16px;line-height:20px;color:#4a4a4a;letter-spacing:0.020px;">barcodetest@rocketmail.com</span>
<span class="t" style="left:778.00px;top:928.00px;font-size:16px;line-height:20px;color:#4a4a4a;letter-spacing:-1.061px;">115689</span>
<svg class="ic" style="left:1177.6px;top:926.17px;width:18.2px;height:18.2px" viewBox="0 0 18 18" ><circle cx="9" cy="9" r="9" fill="#e9141d"/><path fill="#fff" d="M4.300 6.300 6.300 4.300 9 7 11.700 4.300 13.700 6.300 11 9 13.700 11.700 11.700 13.700 9 11 6.300 13.700 4.300 11.700 7 9z"/></svg>
<span class="t" style="left:1199.70px;top:928.00px;font-size:16px;line-height:20px;color:#4a4a4a;letter-spacing:-0.454px;">0123456789</span>
<svg class="ic" style="left:1719px;top:924.77px;width:18.2px;height:21px" viewBox="0 0 18 21" fill="#555" color="#555" ><path d="M1 0h9.5v6.5H18V20a1 1 0 0 1-1 1H1a1 1 0 0 1-1-1V1a1 1 0 0 1 1-1z"/><path d="M12 0.3 17.7 5H12z"/></svg>
<svg class="ic" style="left:1750.3px;top:925.97px;width:18.2px;height:18.2px" viewBox="0 0 18 18" fill="#555" color="#555" ><path fill-rule="evenodd" d="M9 0a9 9 0 1 0 0 18A9 9 0 0 0 9 0zM7.6 3.2h3v2.6h-3zM6.3 7.2h4.4v5.6h1.3v2H6.1v-2h1.6V9.2H6.3z"/></svg>
<svg class="ic" style="left:1782px;top:924.67px;width:19.5px;height:21.2px" viewBox="0 0 19.5 21.2" fill="#555" color="#555" ><path fill-rule="evenodd" d="M3.200 1.950a1.950 1.950 0 0 1 3.900 0V3.400h5.300V1.950a1.950 1.950 0 0 1 3.900 0V3.400H18a1.500 1.500 0 0 1 1.500 1.500V19.700a1.500 1.500 0 0 1-1.500 1.500H1.500A1.500 1.500 0 0 1 0 19.700V4.900a1.500 1.500 0 0 1 1.500-1.500h1.700zM4.500 1.950v2.800a0.650 0.650 0 0 0 1.300 0V1.950a0.650 0.650 0 0 0-1.300 0zM13.700 1.950v2.800a0.650 0.650 0 0 0 1.300 0V1.950a0.650 0.650 0 0 0-1.300 0zM1.300 7.500v2.900h3.300V7.500zM5.800 7.500v2.900h3.300V7.500zM10.400 7.500v2.900h3.300V7.500zM14.900 7.500v2.900h3.300V7.500zM1.300 11.900v2.900h3.300v-2.900zM5.800 11.900v2.900h3.300v-2.900zM10.400 11.900v2.900h3.300v-2.900zM14.900 11.900v2.900h3.300v-2.900zM1.300 16.300v2.900h3.300v-2.900zM5.800 16.300v2.900h3.300v-2.900zM10.400 16.300v2.900h3.300v-2.900zM14.900 16.300v2.900h3.300v-2.900z"/></svg>
<svg class="ic" style="left:1814.9px;top:925.97px;width:27.3px;height:18.1px" viewBox="0 0 27.5 18" fill="#555" color="#555" ><path fill-rule="evenodd" d="M1.5 0h24.5a1.5 1.5 0 0 1 1.5 1.5V4.6H0V1.5A1.5 1.5 0 0 1 1.5 0zM0 9.2h27.5v7.3a1.5 1.5 0 0 1-1.5 1.5H1.5A1.5 1.5 0 0 1 0 16.500zM3 13.700v1.400h3v-1.400zM7.900 13.700v1.400h4v-1.400z"/></svg>
<svg class="ic" style="left:1855.9px;top:926.27px;width:17.8px;height:17.6px" viewBox="0 0 18 18" fill="#555" color="#555" ><path d="M16.200 0 18 1.800 14 5.800 16.600 8.400H9.600V1.400L12.200 4zM1.800 18 0 16.200 4 12.200 1.400 9.600H8.400V16.600L5.800 14z"/></svg>
<svg class="ic" style="left:1887.2px;top:926.17px;width:13.8px;height:16.5px" viewBox="0 0 13.8 16.5" fill="#555" color="#555" ><path fill-rule="evenodd" d="M6.900 0a5.200 5.200 0 0 1 5.200 5.200V7.800h0.500a1.200 1.200 0 0 1 1.200 1.200V15.300a1.200 1.200 0 0 1-1.200 1.200H1.200A1.200 1.200 0 0 1 0 15.300V9a1.200 1.200 0 0 1 1.200-1.200h0.500V5.200A5.200 5.200 0 0 1 6.900 0zM6.900 2.400a2.800 2.800 0 0 0-2.800 2.800V7.800h5.600V5.200A2.800 2.800 0 0 0 6.900 2.400z"/></svg>
<svg class="ic" style="left:1917.2px;top:925.87px;width:18.7px;height:18.7px" viewBox="0 0 18.6 18.6" fill="#555" color="#555" ><g fill="none" stroke="currentColor"><circle cx="9.3" cy="9.3" r="5.00" stroke-width="4.00"/><path stroke-width="3.5" d="M15.30 9.30L18.60 9.30M13.54 13.54L15.88 15.88M9.30 15.30L9.30 18.60M5.06 13.54L2.72 15.88M3.30 9.30L0.00 9.30M5.06 5.06L2.72 2.72M9.30 3.30L9.30 0.00M13.54 5.06L15.88 2.72"/></g></svg>
<div class="row alt" style="top:975px;height:76px"></div>
<div class="sep" style="top:1050px;background:rgba(0,0,0,0.059)"></div><div class="sep" style="top:1051px;background:rgba(0,0,0,0.006)"></div>
<svg class="ic" style="left:35.9px;top:1001.23px;width:23.6px;height:23.6px" viewBox="0 0 23.6 23.6" ><rect x="1.200" y="1.200" width="21.200" height="21.200" rx="4.300" fill="none" stroke="#8d8d8d" stroke-width="2.400"/></svg>
<span class="t" style="left:163.90px;top:988.00px;font-size:16px;line-height:20px;color:#4a4a4a;letter-spacing:-0.403px;">Barcode1 Test</span>
<svg class="ic" style="left:164.4px;top:1014.23px;width:18.1px;height:18.1px" viewBox="0 0 18 18" ><circle cx="9" cy="9" r="9" fill="#f5822a"/><path fill="#fff" d="M7.500 2.700h3v2.800H7.500zM6.100 6.800h4.700v5.700h1.400v2.200H5.900v-2.200h1.600V9H6.100z"/></svg>
<svg class="ic" style="left:200.9px;top:1013.43px;width:18.2px;height:21.4px" viewBox="0 0 18.2 21.4" ><g fill="none" stroke="#0c7c16"><rect x="-6.200" y="-6.200" width="12.400" height="12.400" rx="1.300" stroke-width="1.300" transform="translate(9.100 9.200) rotate(45)"/><rect x="-4.900" y="-4.900" width="9.800" height="9.800" rx="0.800" stroke-width="0.900" stroke-dasharray="1.400 0.500" transform="translate(9.100 9.200) rotate(45)"/></g><g fill="#0c7c16"><path d="M14.300 6.900 18.300 11.500a1.200 1.200 0 0 1 0 1.500L11.600 18.300 9.300 17.600 14.600 12.300 12.500 8.700z"/><rect x="-1.900" y="-1.900" width="3.800" height="3.800" rx="0.400" transform="translate(7.600 12.900) rotate(45)"/><circle cx="4.900" cy="9.900" r="1.050"/><rect x="-1.800" y="-1.800" width="3.600" height="3.600" opacity="0.700" transform="translate(10.700 6.200) rotate(45)"/><rect x="5.300" y="18.900" width="8.800" height="2.400" rx="1.100"/></g></svg>
<svg class="ic" style="left:237.1px;top:1012.93px;width:21.2px;height:19.6px" viewBox="0 0 21 19.6" ><path fill="#f5822a" d="M10.500 0.300a1.300 1.300 0 0 1 1.150 0.700l9.100 16.500a1.300 1.300 0 0 1-1.150 1.950H1.400a1.300 1.300 0 0 1-1.150-1.950L9.350 1a1.300 1.300 0 0 1 1.150-0.700z"/><path fill="#fff" d="M9.200 6.200h2.600v6.300H9.200zM9.200 14.100h2.600v2.600H9.200z"/><path fill="#f5822a" opacity=".35" d="M9.200 9.300h2.600v0.500H9.200z"/></svg>
<span class="t" style="left:501.50px;top:1003.00px;font-size:16px;line-height:20px;color:#4a4a4a;letter-spacing:-0.168px;">barcodetest1@gmail.com</span>
<span class="t" style="left:779.00px;top:1003.00px;font-size:16px;line-height:20px;color:#4a4a4a;letter-spacing:0.268px;">3053506</span>
<svg class="ic" style="left:1177.6px;top:1001.93px;width:18.2px;height:18.2px" viewBox="0 0 18 18" ><circle cx="9" cy="9" r="9" fill="#e9141d"/><path fill="#fff" d="M4.300 6.300 6.300 4.300 9 7 11.700 4.300 13.700 6.300 11 9 13.700 11.700 11.700 13.700 9 11 6.300 13.700 4.300 11.700 7 9z"/></svg>
<span class="t" style="left:1199.70px;top:1003.00px;font-size:16px;line-height:20px;color:#4a4a4a;letter-spacing:-0.454px;">0123456789</span>
<svg class="ic" style="left:1719px;top:1000.53px;width:18.2px;height:21px" viewBox="0 0 18 21" fill="#555" color="#555" ><path d="M1 0h9.5v6.5H18V20a1 1 0 0 1-1 1H1a1 1 0 0 1-1-1V1a1 1 0 0 1 1-1z"/><path d="M12 0.3 17.7 5H12z"/></svg>
<svg class="ic" style="left:1750.3px;top:1001.73px;width:18.2px;height:18.2px" viewBox="0 0 18 18" fill="#555" color="#555" ><path fill-rule="evenodd" d="M9 0a9 9 0 1 0 0 18A9 9 0 0 0 9 0zM7.6 3.2h3v2.6h-3zM6.3 7.2h4.4v5.6h1.3v2H6.1v-2h1.6V9.2H6.3z"/></svg>
<svg class="ic" style="left:1782px;top:1000.43px;width:19.5px;height:21.2px" viewBox="0 0 19.5 21.2" fill="#555" color="#555" ><path fill-rule="evenodd" d="M3.200 1.950a1.950 1.950 0 0 1 3.900 0V3.400h5.300V1.950a1.950 1.950 0 0 1 3.900 0V3.400H18a1.500 1.500 0 0 1 1.500 1.500V19.700a1.500 1.500 0 0 1-1.500 1.500H1.500A1.500 1.500 0 0 1 0 19.700V4.900a1.500 1.500 0 0 1 1.500-1.500h1.700zM4.500 1.950v2.800a0.650 0.650 0 0 0 1.300 0V1.950a0.650 0.650 0 0 0-1.300 0zM13.700 1.950v2.800a0.650 0.650 0 0 0 1.300 0V1.950a0.650 0.650 0 0 0-1.300 0zM1.300 7.500v2.900h3.300V7.500zM5.800 7.500v2.900h3.300V7.500zM10.400 7.500v2.900h3.300V7.500zM14.900 7.500v2.900h3.300V7.500zM1.300 11.900v2.900h3.300v-2.900zM5.800 11.900v2.900h3.300v-2.900zM10.400 11.900v2.900h3.300v-2.900zM14.900 11.900v2.900h3.300v-2.900zM1.300 16.300v2.900h3.300v-2.900zM5.800 16.300v2.900h3.300v-2.900zM10.400 16.300v2.900h3.300v-2.900zM14.900 16.300v2.900h3.300v-2.900z"/></svg>
<svg class="ic" style="left:1814.9px;top:1001.73px;width:27.3px;height:18.1px" viewBox="0 0 27.5 18" fill="#555" color="#555" ><path fill-rule="evenodd" d="M1.5 0h24.5a1.5 1.5 0 0 1 1.5 1.5V4.6H0V1.5A1.5 1.5 0 0 1 1.5 0zM0 9.2h27.5v7.3a1.5 1.5 0 0 1-1.5 1.5H1.5A1.5 1.5 0 0 1 0 16.500zM3 13.700v1.400h3v-1.400zM7.900 13.700v1.400h4v-1.400z"/></svg>
<svg class="ic" style="left:1855.9px;top:1002.03px;width:17.8px;height:17.6px" viewBox="0 0 18 18" fill="#555" color="#555" ><path d="M16.200 0 18 1.800 14 5.800 16.600 8.400H9.600V1.400L12.200 4zM1.800 18 0 16.200 4 12.200 1.400 9.600H8.400V16.600L5.800 14z"/></svg>
<svg class="ic" style="left:1887.2px;top:1001.93px;width:13.8px;height:16.5px" viewBox="0 0 13.8 16.5" fill="#555" color="#555" ><path fill-rule="evenodd" d="M6.900 0a5.200 5.200 0 0 1 5.200 5.200V7.800h0.500a1.200 1.200 0 0 1 1.200 1.200V15.300a1.200 1.200 0 0 1-1.200 1.200H1.200A1.200 1.200 0 0 1 0 15.300V9a1.200 1.200 0 0 1 1.200-1.200h0.500V5.200A5.200 5.200 0 0 1 6.900 0zM6.900 2.400a2.800 2.800 0 0 0-2.800 2.800V7.800h5.600V5.200A2.800 2.800 0 0 0 6.900 2.400z"/></svg>
<svg class="ic" style="left:1917.2px;top:1001.63px;width:18.7px;height:18.7px" viewBox="0 0 18.6 18.6" fill="#555" color="#555" ><g fill="none" stroke="currentColor"><circle cx="9.3" cy="9.3" r="5.00" stroke-width="4.00"/><path stroke-width="3.5" d="M15.30 9.30L18.60 9.30M13.54 13.54L15.88 15.88M9.30 15.30L9.30 18.60M5.06 13.54L2.72 15.88M3.30 9.30L0.00 9.30M5.06 5.06L2.72 2.72M9.30 3.30L9.30 0.00M13.54 5.06L15.88 2.72"/></g></svg>
<div id="hl"></div>
<div id="pill"></div>
<svg class="ic" style="left:1032px;top:557.2px;width:36px;height:27.8px" viewBox="0 0 36 28" ><g fill="none" stroke="#e5513a" stroke-width="2.200" stroke-linejoin="round" stroke-linecap="round"><path d="M6 1.100H1.100v5.400M30 1.100h4.900v5.400M6 26.900H1.100v-5.400M30 26.900h4.900v-5.400"/></g><g fill="#e5513a"><rect x="4.8" y="4.700" width="2.100" height="18.700"/><rect x="9.9" y="4.900" width="2" height="2.300"/><rect x="9.9" y="8.800" width="2" height="14.600"/><rect x="14.5" y="4.900" width="2" height="2.300"/><rect x="14.5" y="8.800" width="2" height="14.600"/><rect x="19.4" y="4.700" width="2.100" height="18.700"/><rect x="24.2" y="4.900" width="2" height="2.300"/><rect x="24.2" y="8.800" width="2" height="14.600"/><rect x="28.9" y="4.700" width="2.100" height="18.700"/></g></svg>
<div id="pager"><b></b><i style="left:36px"></i><i style="left:71px"></i><i style="left:107px"></i><i style="left:142px"></i></div>
<span class="t" style="left:947.40px;top:1084.00px;font-size:16px;line-height:20px;color:#1a1b2e;-webkit-text-stroke:.3px #1a1b2e;">1</span>
<span class="t" style="left:983.10px;top:1084.00px;font-size:16px;line-height:20px;color:#1a1b2e;-webkit-text-stroke:.3px #1a1b2e;">2</span>
<span class="t" style="left:1018.00px;top:1084.00px;font-size:16px;line-height:20px;color:#1a1b2e;-webkit-text-stroke:.3px #1a1b2e;">3</span>
<span class="t" style="left:1053.90px;top:1084.00px;font-size:16px;line-height:20px;color:#1a1b2e;-webkit-text-stroke:.3px #1a1b2e;">&gt;</span>
<span class="t" style="left:1088.80px;top:1084.00px;font-size:16px;line-height:20px;color:#1a1b2e;-webkit-text-stroke:.3px #1a1b2e;">»</span>
</div></body></html>
